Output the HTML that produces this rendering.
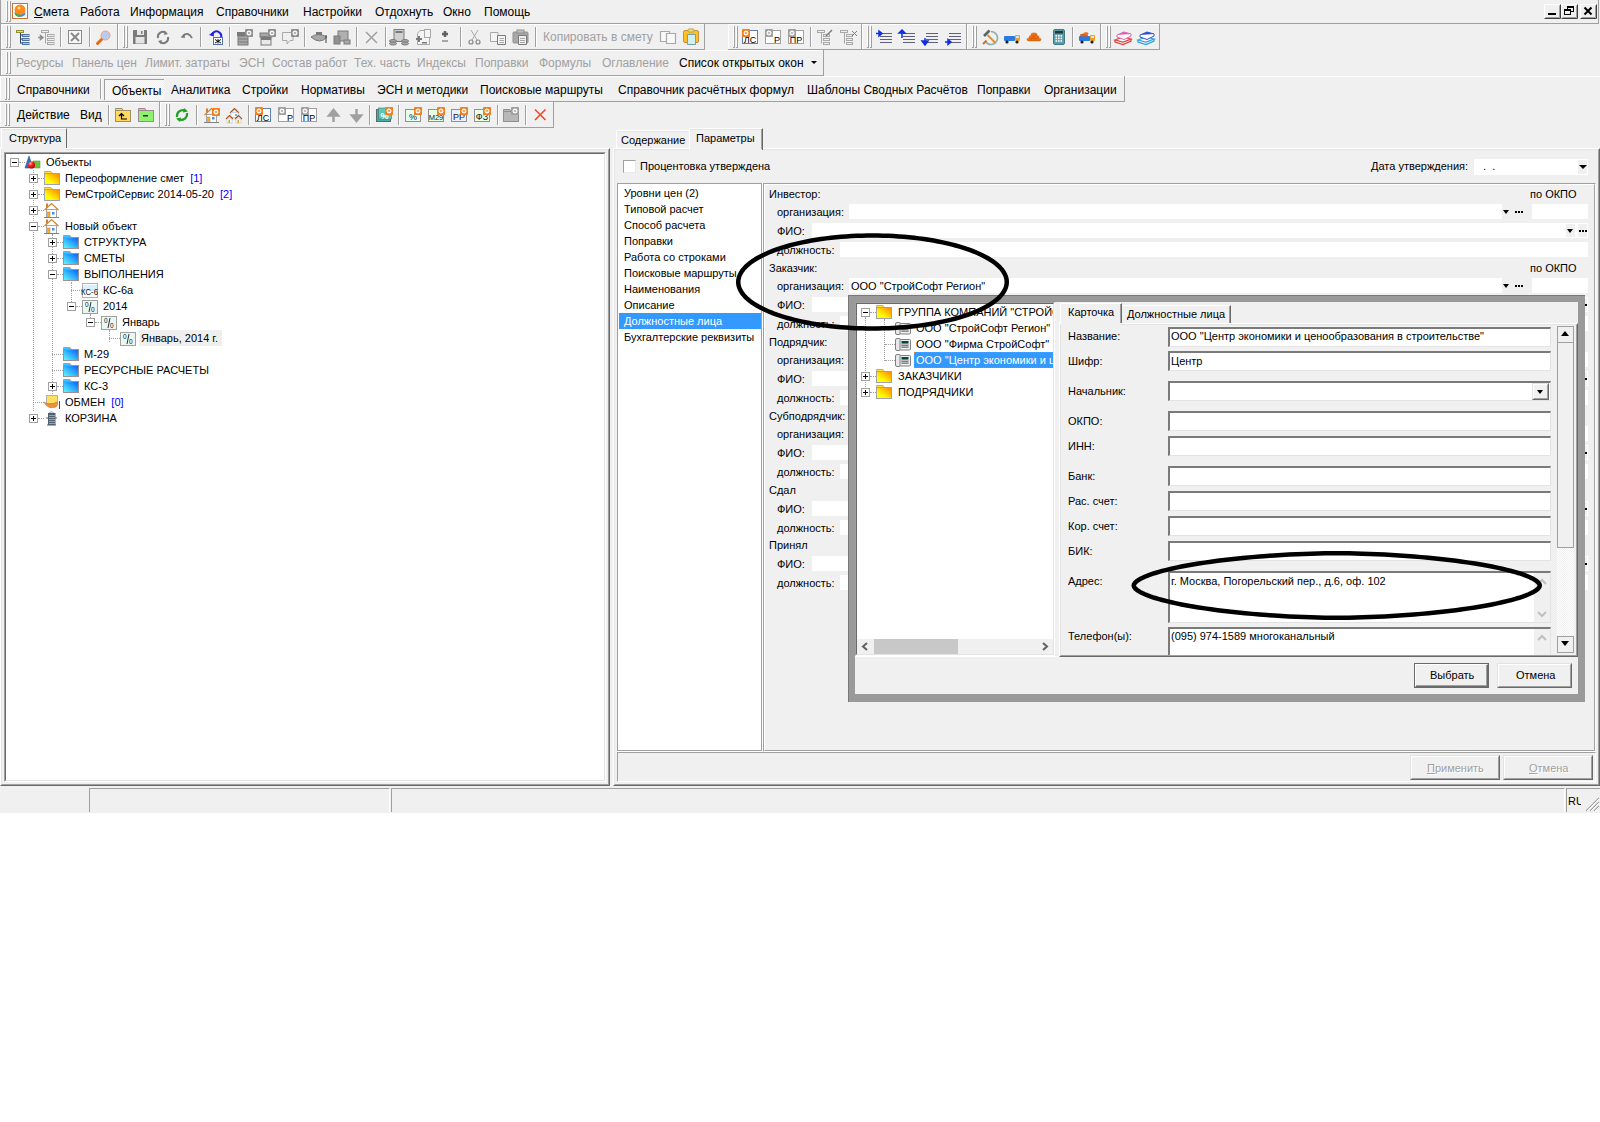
<!DOCTYPE html>
<html><head><meta charset="utf-8"><style>
*{box-sizing:border-box;margin:0;padding:0}
html,body{width:1600px;height:1122px;overflow:hidden;background:#fff}
body{position:relative;font-family:"Liberation Sans",sans-serif;font-size:11px;color:#000}
.a{position:absolute}
.t{position:absolute;white-space:nowrap}
svg{position:absolute;overflow:visible}
</style></head><body>
<div class="a" style="left:0px;top:0px;width:1600px;height:813px;background:#f0f0f0"></div>
<div class="a" style="left:0px;top:23px;width:1599px;height:1px;background:#a0a0a0"></div>
<div class="a" style="left:1598px;top:0px;width:1px;height:23px;background:#a0a0a0"></div>
<div class="a" style="left:0px;top:0px;width:1px;height:76px;background:#a0a0a0"></div>
<div class="a" style="left:6px;top:1px;width:1px;height:21px;background:#fff"></div>
<div class="a" style="left:7px;top:1px;width:1px;height:21px;background:#a0a0a0"></div>
<div class="a" style="left:6px;top:21px;width:1px;height:1px;background:#a0a0a0"></div>
<div class="a" style="left:9px;top:1px;width:1px;height:21px;background:#fff"></div>
<div class="a" style="left:10px;top:1px;width:1px;height:21px;background:#a0a0a0"></div>
<div class="a" style="left:9px;top:21px;width:1px;height:1px;background:#a0a0a0"></div>
<div class="t" style="left:34px;top:5px;font-size:12px;line-height:14px;color:#000;"><u>С</u>мета</div>
<div class="t" style="left:80px;top:5px;font-size:12px;line-height:14px;color:#000;">Работа</div>
<div class="t" style="left:130px;top:5px;font-size:12px;line-height:14px;color:#000;">Информация</div>
<div class="t" style="left:216px;top:5px;font-size:12px;line-height:14px;color:#000;">Справочники</div>
<div class="t" style="left:303px;top:5px;font-size:12px;line-height:14px;color:#000;">Настройки</div>
<div class="t" style="left:375px;top:5px;font-size:12px;line-height:14px;color:#000;">Отдохнуть</div>
<div class="t" style="left:443px;top:5px;font-size:12px;line-height:14px;color:#000;">Окно</div>
<div class="t" style="left:484px;top:5px;font-size:12px;line-height:14px;color:#000;">Помощь</div>
<div class="a" style="left:1px;top:24px;width:116px;height:1px;background:#fff"></div>
<div class="a" style="left:1px;top:24px;width:1px;height:25px;background:#fff"></div>
<div class="a" style="left:1px;top:49px;width:117px;height:1px;background:#a0a0a0"></div>
<div class="a" style="left:117px;top:24px;width:1px;height:25px;background:#a0a0a0"></div>
<div class="a" style="left:6px;top:26px;width:1px;height:22px;background:#fff"></div>
<div class="a" style="left:7px;top:26px;width:1px;height:22px;background:#a0a0a0"></div>
<div class="a" style="left:6px;top:47px;width:1px;height:1px;background:#a0a0a0"></div>
<div class="a" style="left:9px;top:26px;width:1px;height:22px;background:#fff"></div>
<div class="a" style="left:10px;top:26px;width:1px;height:22px;background:#a0a0a0"></div>
<div class="a" style="left:9px;top:47px;width:1px;height:1px;background:#a0a0a0"></div>
<div class="a" style="left:118px;top:24px;width:586px;height:1px;background:#fff"></div>
<div class="a" style="left:118px;top:24px;width:1px;height:25px;background:#fff"></div>
<div class="a" style="left:118px;top:49px;width:587px;height:1px;background:#a0a0a0"></div>
<div class="a" style="left:704px;top:24px;width:1px;height:25px;background:#a0a0a0"></div>
<div class="a" style="left:123px;top:26px;width:1px;height:22px;background:#fff"></div>
<div class="a" style="left:124px;top:26px;width:1px;height:22px;background:#a0a0a0"></div>
<div class="a" style="left:123px;top:47px;width:1px;height:1px;background:#a0a0a0"></div>
<div class="a" style="left:126px;top:26px;width:1px;height:22px;background:#fff"></div>
<div class="a" style="left:127px;top:26px;width:1px;height:22px;background:#a0a0a0"></div>
<div class="a" style="left:126px;top:47px;width:1px;height:1px;background:#a0a0a0"></div>
<div class="a" style="left:728px;top:24px;width:133px;height:1px;background:#fff"></div>
<div class="a" style="left:728px;top:24px;width:1px;height:25px;background:#fff"></div>
<div class="a" style="left:728px;top:49px;width:134px;height:1px;background:#a0a0a0"></div>
<div class="a" style="left:861px;top:24px;width:1px;height:25px;background:#a0a0a0"></div>
<div class="a" style="left:733px;top:26px;width:1px;height:22px;background:#fff"></div>
<div class="a" style="left:734px;top:26px;width:1px;height:22px;background:#a0a0a0"></div>
<div class="a" style="left:733px;top:47px;width:1px;height:1px;background:#a0a0a0"></div>
<div class="a" style="left:736px;top:26px;width:1px;height:22px;background:#fff"></div>
<div class="a" style="left:737px;top:26px;width:1px;height:22px;background:#a0a0a0"></div>
<div class="a" style="left:736px;top:47px;width:1px;height:1px;background:#a0a0a0"></div>
<div class="a" style="left:862px;top:24px;width:104px;height:1px;background:#fff"></div>
<div class="a" style="left:862px;top:24px;width:1px;height:25px;background:#fff"></div>
<div class="a" style="left:862px;top:49px;width:105px;height:1px;background:#a0a0a0"></div>
<div class="a" style="left:966px;top:24px;width:1px;height:25px;background:#a0a0a0"></div>
<div class="a" style="left:867px;top:26px;width:1px;height:22px;background:#fff"></div>
<div class="a" style="left:868px;top:26px;width:1px;height:22px;background:#a0a0a0"></div>
<div class="a" style="left:867px;top:47px;width:1px;height:1px;background:#a0a0a0"></div>
<div class="a" style="left:870px;top:26px;width:1px;height:22px;background:#fff"></div>
<div class="a" style="left:871px;top:26px;width:1px;height:22px;background:#a0a0a0"></div>
<div class="a" style="left:870px;top:47px;width:1px;height:1px;background:#a0a0a0"></div>
<div class="a" style="left:967px;top:24px;width:133px;height:1px;background:#fff"></div>
<div class="a" style="left:967px;top:24px;width:1px;height:25px;background:#fff"></div>
<div class="a" style="left:967px;top:49px;width:134px;height:1px;background:#a0a0a0"></div>
<div class="a" style="left:1100px;top:24px;width:1px;height:25px;background:#a0a0a0"></div>
<div class="a" style="left:972px;top:26px;width:1px;height:22px;background:#fff"></div>
<div class="a" style="left:973px;top:26px;width:1px;height:22px;background:#a0a0a0"></div>
<div class="a" style="left:972px;top:47px;width:1px;height:1px;background:#a0a0a0"></div>
<div class="a" style="left:975px;top:26px;width:1px;height:22px;background:#fff"></div>
<div class="a" style="left:976px;top:26px;width:1px;height:22px;background:#a0a0a0"></div>
<div class="a" style="left:975px;top:47px;width:1px;height:1px;background:#a0a0a0"></div>
<div class="a" style="left:1101px;top:24px;width:58px;height:1px;background:#fff"></div>
<div class="a" style="left:1101px;top:24px;width:1px;height:25px;background:#fff"></div>
<div class="a" style="left:1101px;top:49px;width:59px;height:1px;background:#a0a0a0"></div>
<div class="a" style="left:1159px;top:24px;width:1px;height:25px;background:#a0a0a0"></div>
<div class="a" style="left:1106px;top:26px;width:1px;height:22px;background:#fff"></div>
<div class="a" style="left:1107px;top:26px;width:1px;height:22px;background:#a0a0a0"></div>
<div class="a" style="left:1106px;top:47px;width:1px;height:1px;background:#a0a0a0"></div>
<div class="a" style="left:1109px;top:26px;width:1px;height:22px;background:#fff"></div>
<div class="a" style="left:1110px;top:26px;width:1px;height:22px;background:#a0a0a0"></div>
<div class="a" style="left:1109px;top:47px;width:1px;height:1px;background:#a0a0a0"></div>
<div class="a" style="left:60px;top:27px;width:1px;height:20px;background:#a0a0a0"></div>
<div class="a" style="left:61px;top:27px;width:1px;height:20px;background:#fff"></div>
<div class="a" style="left:89px;top:27px;width:1px;height:20px;background:#a0a0a0"></div>
<div class="a" style="left:90px;top:27px;width:1px;height:20px;background:#fff"></div>
<div class="a" style="left:200px;top:27px;width:1px;height:20px;background:#a0a0a0"></div>
<div class="a" style="left:201px;top:27px;width:1px;height:20px;background:#fff"></div>
<div class="a" style="left:229px;top:27px;width:1px;height:20px;background:#a0a0a0"></div>
<div class="a" style="left:230px;top:27px;width:1px;height:20px;background:#fff"></div>
<div class="a" style="left:304px;top:27px;width:1px;height:20px;background:#a0a0a0"></div>
<div class="a" style="left:305px;top:27px;width:1px;height:20px;background:#fff"></div>
<div class="a" style="left:356px;top:27px;width:1px;height:20px;background:#a0a0a0"></div>
<div class="a" style="left:357px;top:27px;width:1px;height:20px;background:#fff"></div>
<div class="a" style="left:385px;top:27px;width:1px;height:20px;background:#a0a0a0"></div>
<div class="a" style="left:386px;top:27px;width:1px;height:20px;background:#fff"></div>
<div class="a" style="left:460px;top:27px;width:1px;height:20px;background:#a0a0a0"></div>
<div class="a" style="left:461px;top:27px;width:1px;height:20px;background:#fff"></div>
<div class="a" style="left:535px;top:27px;width:1px;height:20px;background:#a0a0a0"></div>
<div class="a" style="left:536px;top:27px;width:1px;height:20px;background:#fff"></div>
<div class="a" style="left:810px;top:27px;width:1px;height:20px;background:#a0a0a0"></div>
<div class="a" style="left:811px;top:27px;width:1px;height:20px;background:#fff"></div>
<div class="a" style="left:1072px;top:27px;width:1px;height:20px;background:#a0a0a0"></div>
<div class="a" style="left:1073px;top:27px;width:1px;height:20px;background:#fff"></div>
<div class="a" style="left:1px;top:50px;width:822px;height:1px;background:#fff"></div>
<div class="a" style="left:1px;top:50px;width:1px;height:25px;background:#fff"></div>
<div class="a" style="left:1px;top:75px;width:823px;height:1px;background:#a0a0a0"></div>
<div class="a" style="left:823px;top:50px;width:1px;height:25px;background:#a0a0a0"></div>
<div class="a" style="left:6px;top:52px;width:1px;height:22px;background:#fff"></div>
<div class="a" style="left:7px;top:52px;width:1px;height:22px;background:#a0a0a0"></div>
<div class="a" style="left:6px;top:73px;width:1px;height:1px;background:#a0a0a0"></div>
<div class="a" style="left:9px;top:52px;width:1px;height:22px;background:#fff"></div>
<div class="a" style="left:10px;top:52px;width:1px;height:22px;background:#a0a0a0"></div>
<div class="a" style="left:9px;top:73px;width:1px;height:1px;background:#a0a0a0"></div>
<div class="t" style="left:16px;top:56px;font-size:12px;line-height:14px;color:#a0a0a0;">Ресурсы</div>
<div class="t" style="left:72px;top:56px;font-size:12px;line-height:14px;color:#a0a0a0;">Панель цен</div>
<div class="t" style="left:145px;top:56px;font-size:12px;line-height:14px;color:#a0a0a0;">Лимит. затраты</div>
<div class="t" style="left:239px;top:56px;font-size:12px;line-height:14px;color:#a0a0a0;">ЭСН</div>
<div class="t" style="left:272px;top:56px;font-size:12px;line-height:14px;color:#a0a0a0;">Состав работ</div>
<div class="t" style="left:354px;top:56px;font-size:12px;line-height:14px;color:#a0a0a0;">Тех. часть</div>
<div class="t" style="left:417px;top:56px;font-size:12px;line-height:14px;color:#a0a0a0;">Индексы</div>
<div class="t" style="left:475px;top:56px;font-size:12px;line-height:14px;color:#a0a0a0;">Поправки</div>
<div class="t" style="left:539px;top:56px;font-size:12px;line-height:14px;color:#a0a0a0;">Формулы</div>
<div class="t" style="left:602px;top:56px;font-size:12px;line-height:14px;color:#a0a0a0;">Оглавление</div>
<div class="t" style="left:679px;top:56px;font-size:12px;line-height:14px;color:#000;">Список открытых окон</div>
<div class="a" style="left:811px;top:61px;width:0;height:0;border-left:3px solid transparent;border-right:3px solid transparent;border-top:3.5px solid #000"></div>
<div class="t" style="left:543px;top:30px;font-size:12px;line-height:14px;color:#a0a0a0;">Копировать в смету</div>
<div class="a" style="left:0px;top:76px;width:1600px;height:1px;background:#fff"></div>
<div class="a" style="left:0px;top:76px;width:1124px;height:1px;background:#fff"></div>
<div class="a" style="left:0px;top:76px;width:1px;height:25px;background:#fff"></div>
<div class="a" style="left:0px;top:101px;width:1125px;height:1px;background:#a0a0a0"></div>
<div class="a" style="left:1124px;top:76px;width:1px;height:25px;background:#a0a0a0"></div>
<div class="a" style="left:5px;top:78px;width:1px;height:22px;background:#fff"></div>
<div class="a" style="left:6px;top:78px;width:1px;height:22px;background:#a0a0a0"></div>
<div class="a" style="left:5px;top:99px;width:1px;height:1px;background:#a0a0a0"></div>
<div class="a" style="left:8px;top:78px;width:1px;height:22px;background:#fff"></div>
<div class="a" style="left:9px;top:78px;width:1px;height:22px;background:#a0a0a0"></div>
<div class="a" style="left:8px;top:99px;width:1px;height:1px;background:#a0a0a0"></div>
<div class="a" style="left:100px;top:79px;width:1px;height:20px;background:#a0a0a0"></div>
<div class="a" style="left:101px;top:79px;width:1px;height:20px;background:#fff"></div>
<div class="a" style="left:104px;top:79px;width:60px;height:21px;background:repeating-conic-gradient(#f0f0f0 0 25%, #fbfbfb 0 50%) 0 0/2px 2px;border-top:1px solid #a0a0a0;border-left:1px solid #a0a0a0"></div>
<div class="t" style="left:112px;top:84px;font-size:12px;line-height:14px;color:#000;">Объекты</div>
<div class="t" style="left:17px;top:83px;font-size:12px;line-height:14px;color:#000;">Справочники</div>
<div class="t" style="left:171px;top:83px;font-size:12px;line-height:14px;color:#000;">Аналитика</div>
<div class="t" style="left:242px;top:83px;font-size:12px;line-height:14px;color:#000;">Стройки</div>
<div class="t" style="left:301px;top:83px;font-size:12px;line-height:14px;color:#000;">Нормативы</div>
<div class="t" style="left:377px;top:83px;font-size:12px;line-height:14px;color:#000;">ЭСН и методики</div>
<div class="t" style="left:480px;top:83px;font-size:12px;line-height:14px;color:#000;">Поисковые маршруты</div>
<div class="t" style="left:618px;top:83px;font-size:12px;line-height:14px;color:#000;">Справочник расчётных формул</div>
<div class="t" style="left:807px;top:83px;font-size:12px;line-height:14px;color:#000;">Шаблоны Сводных Расчётов</div>
<div class="t" style="left:977px;top:83px;font-size:12px;line-height:14px;color:#000;">Поправки</div>
<div class="t" style="left:1044px;top:83px;font-size:12px;line-height:14px;color:#000;">Организации</div>
<div class="a" style="left:0px;top:102px;width:553px;height:1px;background:#fff"></div>
<div class="a" style="left:0px;top:102px;width:1px;height:25px;background:#fff"></div>
<div class="a" style="left:0px;top:127px;width:554px;height:1px;background:#a0a0a0"></div>
<div class="a" style="left:553px;top:102px;width:1px;height:25px;background:#a0a0a0"></div>
<div class="a" style="left:5px;top:104px;width:1px;height:22px;background:#fff"></div>
<div class="a" style="left:6px;top:104px;width:1px;height:22px;background:#a0a0a0"></div>
<div class="a" style="left:5px;top:125px;width:1px;height:1px;background:#a0a0a0"></div>
<div class="a" style="left:8px;top:104px;width:1px;height:22px;background:#fff"></div>
<div class="a" style="left:9px;top:104px;width:1px;height:22px;background:#a0a0a0"></div>
<div class="a" style="left:8px;top:125px;width:1px;height:1px;background:#a0a0a0"></div>
<div class="a" style="left:108px;top:105px;width:1px;height:20px;background:#a0a0a0"></div>
<div class="a" style="left:109px;top:105px;width:1px;height:20px;background:#fff"></div>
<div class="a" style="left:196px;top:105px;width:1px;height:20px;background:#a0a0a0"></div>
<div class="a" style="left:197px;top:105px;width:1px;height:20px;background:#fff"></div>
<div class="a" style="left:248px;top:105px;width:1px;height:20px;background:#a0a0a0"></div>
<div class="a" style="left:249px;top:105px;width:1px;height:20px;background:#fff"></div>
<div class="a" style="left:369px;top:105px;width:1px;height:20px;background:#a0a0a0"></div>
<div class="a" style="left:370px;top:105px;width:1px;height:20px;background:#fff"></div>
<div class="a" style="left:398px;top:105px;width:1px;height:20px;background:#a0a0a0"></div>
<div class="a" style="left:399px;top:105px;width:1px;height:20px;background:#fff"></div>
<div class="a" style="left:497px;top:105px;width:1px;height:20px;background:#a0a0a0"></div>
<div class="a" style="left:498px;top:105px;width:1px;height:20px;background:#fff"></div>
<div class="a" style="left:525px;top:105px;width:1px;height:20px;background:#a0a0a0"></div>
<div class="a" style="left:526px;top:105px;width:1px;height:20px;background:#fff"></div>
<div class="a" style="left:159px;top:102px;width:1px;height:26px;background:#a0a0a0"></div>
<div class="a" style="left:160px;top:102px;width:1px;height:25px;background:#fff"></div>
<div class="a" style="left:165px;top:104px;width:1px;height:22px;background:#fff"></div>
<div class="a" style="left:166px;top:104px;width:1px;height:22px;background:#a0a0a0"></div>
<div class="a" style="left:165px;top:125px;width:1px;height:1px;background:#a0a0a0"></div>
<div class="a" style="left:168px;top:104px;width:1px;height:22px;background:#fff"></div>
<div class="a" style="left:169px;top:104px;width:1px;height:22px;background:#a0a0a0"></div>
<div class="a" style="left:168px;top:125px;width:1px;height:1px;background:#a0a0a0"></div>
<div class="t" style="left:17px;top:108px;font-size:12px;line-height:14px;color:#000;">Действие</div>
<div class="t" style="left:80px;top:108px;font-size:12px;line-height:14px;color:#000;">Вид</div>
<div class="a" style="left:1px;top:128px;width:66px;height:21px;background:#f0f0f0;border-top:1px solid #fff;border-left:1px solid #fff;border-right:1px solid #696969"></div>
<div class="a" style="left:2px;top:129px;width:63px;height:1px;background:#e3e3e3"></div>
<div class="t" style="left:9px;top:132px;font-size:11px;line-height:13px;color:#000;">Структура</div>
<div class="a" style="left:0px;top:148px;width:610px;height:638px;border-top:1px solid #fff;border-left:1px solid #fff;border-right:1px solid #696969;border-bottom:1px solid #696969"></div>
<div class="a" style="left:1px;top:149px;width:608px;height:636px;border-top:1px solid #e3e3e3;border-left:1px solid #e3e3e3;border-right:1px solid #a0a0a0;border-bottom:1px solid #a0a0a0"></div>
<div class="a" style="left:2px;top:148px;width:64px;height:1px;background:#f0f0f0"></div>
<div class="a" style="left:2px;top:149px;width:64px;height:1px;background:#f0f0f0"></div>
<div class="a" style="left:4px;top:152px;width:602px;height:630px;background:#fff;border-top:1px solid #a0a0a0;border-left:1px solid #a0a0a0;border-bottom:1px solid #fff;border-right:1px solid #fff"></div>
<div class="a" style="left:5px;top:153px;width:600px;height:628px;border-top:1px solid #696969;border-left:1px solid #696969;border-bottom:1px solid #e3e3e3;border-right:1px solid #e3e3e3"></div>
<div class="a" style="left:33px;top:170px;width:1px;height:241px;border-left:1px dotted #a0a0a0"></div>
<div class="a" style="left:52px;top:234px;width:1px;height:160px;border-left:1px dotted #a0a0a0"></div>
<div class="a" style="left:71px;top:282px;width:1px;height:28px;border-left:1px dotted #a0a0a0"></div>
<div class="a" style="left:90px;top:314px;width:1px;height:12px;border-left:1px dotted #a0a0a0"></div>
<div class="a" style="left:109px;top:330px;width:1px;height:12px;border-left:1px dotted #a0a0a0"></div>
<div class="a" style="left:19px;top:162px;width:6px;height:1px;border-top:1px dotted #a0a0a0"></div>
<div class="a" style="left:10px;top:158px;width:9px;height:9px;background:#fff;border:1px solid #a0a0a0"></div>
<div class="a" style="left:12px;top:162px;width:5px;height:1px;background:#000"></div>
<div class="t" style="left:46px;top:156px;font-size:11px;line-height:13px;color:#000;">Объекты</div>
<div class="a" style="left:38px;top:178px;width:6px;height:1px;border-top:1px dotted #a0a0a0"></div>
<div class="a" style="left:29px;top:174px;width:9px;height:9px;background:#fff;border:1px solid #a0a0a0"></div>
<div class="a" style="left:31px;top:178px;width:5px;height:1px;background:#000"></div>
<div class="a" style="left:33px;top:176px;width:1px;height:5px;background:#000"></div>
<div class="t" style="left:65px;top:172px;font-size:11px;line-height:13px;color:#000;">Переоформление смет&nbsp; <span style="color:#00f">[1]</span></div>
<div class="a" style="left:38px;top:194px;width:6px;height:1px;border-top:1px dotted #a0a0a0"></div>
<div class="a" style="left:29px;top:190px;width:9px;height:9px;background:#fff;border:1px solid #a0a0a0"></div>
<div class="a" style="left:31px;top:194px;width:5px;height:1px;background:#000"></div>
<div class="a" style="left:33px;top:192px;width:1px;height:5px;background:#000"></div>
<div class="t" style="left:65px;top:188px;font-size:11px;line-height:13px;color:#000;">РемСтройСервис 2014-05-20&nbsp; <span style="color:#00f">[2]</span></div>
<div class="a" style="left:38px;top:210px;width:6px;height:1px;border-top:1px dotted #a0a0a0"></div>
<div class="a" style="left:29px;top:206px;width:9px;height:9px;background:#fff;border:1px solid #a0a0a0"></div>
<div class="a" style="left:31px;top:210px;width:5px;height:1px;background:#000"></div>
<div class="a" style="left:33px;top:208px;width:1px;height:5px;background:#000"></div>
<div class="a" style="left:38px;top:226px;width:6px;height:1px;border-top:1px dotted #a0a0a0"></div>
<div class="a" style="left:29px;top:222px;width:9px;height:9px;background:#fff;border:1px solid #a0a0a0"></div>
<div class="a" style="left:31px;top:226px;width:5px;height:1px;background:#000"></div>
<div class="t" style="left:65px;top:220px;font-size:11px;line-height:13px;color:#000;">Новый объект</div>
<div class="a" style="left:57px;top:242px;width:6px;height:1px;border-top:1px dotted #a0a0a0"></div>
<div class="a" style="left:48px;top:238px;width:9px;height:9px;background:#fff;border:1px solid #a0a0a0"></div>
<div class="a" style="left:50px;top:242px;width:5px;height:1px;background:#000"></div>
<div class="a" style="left:52px;top:240px;width:1px;height:5px;background:#000"></div>
<div class="t" style="left:84px;top:236px;font-size:11px;line-height:13px;color:#000;">СТРУКТУРА</div>
<div class="a" style="left:57px;top:258px;width:6px;height:1px;border-top:1px dotted #a0a0a0"></div>
<div class="a" style="left:48px;top:254px;width:9px;height:9px;background:#fff;border:1px solid #a0a0a0"></div>
<div class="a" style="left:50px;top:258px;width:5px;height:1px;background:#000"></div>
<div class="a" style="left:52px;top:256px;width:1px;height:5px;background:#000"></div>
<div class="t" style="left:84px;top:252px;font-size:11px;line-height:13px;color:#000;">СМЕТЫ</div>
<div class="a" style="left:57px;top:274px;width:6px;height:1px;border-top:1px dotted #a0a0a0"></div>
<div class="a" style="left:48px;top:270px;width:9px;height:9px;background:#fff;border:1px solid #a0a0a0"></div>
<div class="a" style="left:50px;top:274px;width:5px;height:1px;background:#000"></div>
<div class="t" style="left:84px;top:268px;font-size:11px;line-height:13px;color:#000;">ВЫПОЛНЕНИЯ</div>
<div class="a" style="left:71px;top:290px;width:11px;height:1px;border-top:1px dotted #a0a0a0"></div>
<div class="t" style="left:103px;top:284px;font-size:11px;line-height:13px;color:#000;">КС-6а</div>
<div class="a" style="left:76px;top:306px;width:6px;height:1px;border-top:1px dotted #a0a0a0"></div>
<div class="a" style="left:67px;top:302px;width:9px;height:9px;background:#fff;border:1px solid #a0a0a0"></div>
<div class="a" style="left:69px;top:306px;width:5px;height:1px;background:#000"></div>
<div class="t" style="left:103px;top:300px;font-size:11px;line-height:13px;color:#000;">2014</div>
<div class="a" style="left:95px;top:322px;width:6px;height:1px;border-top:1px dotted #a0a0a0"></div>
<div class="a" style="left:86px;top:318px;width:9px;height:9px;background:#fff;border:1px solid #a0a0a0"></div>
<div class="a" style="left:88px;top:322px;width:5px;height:1px;background:#000"></div>
<div class="t" style="left:122px;top:316px;font-size:11px;line-height:13px;color:#000;">Январь</div>
<div class="a" style="left:109px;top:338px;width:11px;height:1px;border-top:1px dotted #a0a0a0"></div>
<div class="a" style="left:139px;top:330px;width:83px;height:16px;background:#efefef"></div>
<div class="t" style="left:141px;top:332px;font-size:11px;line-height:13px;color:#000;">Январь, 2014 г.</div>
<div class="a" style="left:52px;top:354px;width:11px;height:1px;border-top:1px dotted #a0a0a0"></div>
<div class="t" style="left:84px;top:348px;font-size:11px;line-height:13px;color:#000;">М-29</div>
<div class="a" style="left:52px;top:370px;width:11px;height:1px;border-top:1px dotted #a0a0a0"></div>
<div class="t" style="left:84px;top:364px;font-size:11px;line-height:13px;color:#000;">РЕСУРСНЫЕ РАСЧЕТЫ</div>
<div class="a" style="left:57px;top:386px;width:6px;height:1px;border-top:1px dotted #a0a0a0"></div>
<div class="a" style="left:48px;top:382px;width:9px;height:9px;background:#fff;border:1px solid #a0a0a0"></div>
<div class="a" style="left:50px;top:386px;width:5px;height:1px;background:#000"></div>
<div class="a" style="left:52px;top:384px;width:1px;height:5px;background:#000"></div>
<div class="t" style="left:84px;top:380px;font-size:11px;line-height:13px;color:#000;">КС-3</div>
<div class="a" style="left:33px;top:402px;width:11px;height:1px;border-top:1px dotted #a0a0a0"></div>
<div class="t" style="left:65px;top:396px;font-size:11px;line-height:13px;color:#000;">ОБМЕН&nbsp; <span style="color:#00f">[0]</span></div>
<div class="a" style="left:38px;top:418px;width:6px;height:1px;border-top:1px dotted #a0a0a0"></div>
<div class="a" style="left:29px;top:414px;width:9px;height:9px;background:#fff;border:1px solid #a0a0a0"></div>
<div class="a" style="left:31px;top:418px;width:5px;height:1px;background:#000"></div>
<div class="a" style="left:33px;top:416px;width:1px;height:5px;background:#000"></div>
<div class="t" style="left:65px;top:412px;font-size:11px;line-height:13px;color:#000;">КОРЗИНА</div>
<div class="a" style="left:616px;top:130px;width:73px;height:19px;background:#f0f0f0;border-top:1px solid #fff;border-left:1px solid #fff"></div>
<div class="a" style="left:617px;top:131px;width:71px;height:1px;background:#e3e3e3"></div>
<div class="t" style="left:621px;top:134px;font-size:11px;line-height:13px;color:#000;">Содержание</div>
<div class="a" style="left:613px;top:148px;width:987px;height:638px;border-top:1px solid #fff;border-left:1px solid #fff;border-right:1px solid #696969;border-bottom:1px solid #696969"></div>
<div class="a" style="left:614px;top:149px;width:985px;height:636px;border-top:1px solid #e3e3e3;border-left:1px solid #e3e3e3;border-right:1px solid #a0a0a0;border-bottom:1px solid #a0a0a0"></div>
<div class="a" style="left:689px;top:128px;width:74px;height:22px;background:#f0f0f0;border-top:1px solid #fff;border-left:1px solid #fff;border-right:1px solid #696969"></div>
<div class="a" style="left:690px;top:129px;width:71px;height:1px;background:#e3e3e3"></div>
<div class="a" style="left:761px;top:129px;width:1px;height:20px;background:#a0a0a0"></div>
<div class="t" style="left:696px;top:132px;font-size:11px;line-height:13px;color:#000;">Параметры</div>
<div class="a" style="left:623px;top:160px;width:13px;height:13px;background:#fff;border-top:1px solid #a0a0a0;border-left:1px solid #a0a0a0;border-bottom:1px solid #e8e8e8;border-right:1px solid #e8e8e8"></div>
<div class="t" style="left:640px;top:160px;font-size:11px;line-height:13px;color:#000;">Процентовка утверждена</div>
<div class="t" style="left:1371px;top:160px;font-size:11px;line-height:13px;color:#000;">Дата утверждения:</div>
<div class="a" style="left:1474px;top:159px;width:114px;height:16px;background:#fff"></div>
<div class="t" style="left:1483px;top:160px;font-size:11px;line-height:13px;color:#000;">.&nbsp; .</div>
<div class="a" style="left:1578px;top:160px;width:9px;height:14px;background:#f0f0f0"></div>
<div class="a" style="left:1579px;top:165px;width:0;height:0;border-left:4px solid transparent;border-right:4px solid transparent;border-top:4px solid #000"></div>
<div class="a" style="left:617px;top:183px;width:145px;height:568px;background:#fff;border:1px solid #a0a0a0"></div>
<div class="a" style="left:762px;top:183px;width:1px;height:569px;background:#fff"></div>
<div class="a" style="left:617px;top:751px;width:146px;height:1px;background:#fff"></div>
<div class="a" style="left:619px;top:313px;width:142px;height:16px;background:#3399ff"></div>
<div class="t" style="left:624px;top:187px;font-size:11px;line-height:13px;color:#000;">Уровни цен (2)</div>
<div class="t" style="left:624px;top:203px;font-size:11px;line-height:13px;color:#000;">Типовой расчет</div>
<div class="t" style="left:624px;top:219px;font-size:11px;line-height:13px;color:#000;">Способ расчета</div>
<div class="t" style="left:624px;top:235px;font-size:11px;line-height:13px;color:#000;">Поправки</div>
<div class="t" style="left:624px;top:251px;font-size:11px;line-height:13px;color:#000;">Работа со строками</div>
<div class="t" style="left:624px;top:267px;font-size:11px;line-height:13px;color:#000;">Поисковые маршруты</div>
<div class="t" style="left:624px;top:283px;font-size:11px;line-height:13px;color:#000;">Наименования</div>
<div class="t" style="left:624px;top:299px;font-size:11px;line-height:13px;color:#000;">Описание</div>
<div class="t" style="left:624px;top:315px;font-size:11px;line-height:13px;color:#fff;">Должностные лица</div>
<div class="t" style="left:624px;top:331px;font-size:11px;line-height:13px;color:#000;">Бухгалтерские реквизиты</div>
<div class="a" style="left:763px;top:183px;width:833px;height:569px;border-top:1px solid #a0a0a0;border-left:1px solid #a0a0a0;border-right:1px solid #fff;border-bottom:1px solid #fff"></div>
<div class="a" style="left:764px;top:184px;width:831px;height:567px;border-top:1px solid #fff;border-left:1px solid #fff;border-right:1px solid #a0a0a0;border-bottom:1px solid #a0a0a0"></div>
<div class="a" style="left:617px;top:752px;width:979px;height:30px;border-top:1px solid #a0a0a0;border-left:1px solid #a0a0a0;border-right:1px solid #fff;border-bottom:1px solid #fff"></div>
<div class="a" style="left:1410px;top:755px;width:90px;height:25px;background:#f0f0f0;border-top:1px solid #e3e3e3;border-left:1px solid #e3e3e3;border-bottom:1px solid #696969;border-right:1px solid #696969"></div>
<div class="a" style="left:1411px;top:756px;width:88px;height:23px;border-top:1px solid #fff;border-left:1px solid #fff;border-bottom:1px solid #a0a0a0;border-right:1px solid #a0a0a0"></div>
<div class="t" style="left:1427px;top:762px;font-size:11px;line-height:13px;color:#a0a0a0;text-shadow:1px 1px 0 #fff"><u>П</u>рименить</div>
<div class="a" style="left:1503px;top:755px;width:90px;height:25px;background:#f0f0f0;border-top:1px solid #e3e3e3;border-left:1px solid #e3e3e3;border-bottom:1px solid #696969;border-right:1px solid #696969"></div>
<div class="a" style="left:1504px;top:756px;width:88px;height:23px;border-top:1px solid #fff;border-left:1px solid #fff;border-bottom:1px solid #a0a0a0;border-right:1px solid #a0a0a0"></div>
<div class="t" style="left:1529px;top:762px;font-size:11px;line-height:13px;color:#a0a0a0;text-shadow:1px 1px 0 #fff"><u>О</u>тмена</div>
<div class="t" style="left:769px;top:188px;font-size:11px;line-height:13px;color:#000;">Инвестор:</div>
<div class="t" style="left:1530px;top:188px;font-size:11px;line-height:13px;color:#000;">по ОКПО</div>
<div class="t" style="left:777px;top:206px;font-size:11px;line-height:13px;color:#000;">организация:</div>
<div class="a" style="left:849px;top:204px;width:653px;height:15px;background:#fff"></div>
<div class="a" style="left:1502px;top:205px;width:9px;height:13px;background:#f0f0f0"></div>
<div class="a" style="left:1503px;top:210px;width:0;height:0;border-left:3.5px solid transparent;border-right:3.5px solid transparent;border-top:4px solid #000"></div>
<div class="a" style="left:1514px;top:205px;width:9px;height:13px;background:#f0f0f0"></div>
<div class="a" style="left:1515px;top:211px;width:2px;height:2px;background:#000"></div>
<div class="a" style="left:1518px;top:211px;width:2px;height:2px;background:#000"></div>
<div class="a" style="left:1521px;top:211px;width:2px;height:2px;background:#000"></div>
<div class="a" style="left:1532px;top:204px;width:56px;height:15px;background:#fff"></div>
<div class="t" style="left:777px;top:225px;font-size:11px;line-height:13px;color:#000;">ФИО:</div>
<div class="a" style="left:812px;top:223px;width:776px;height:15px;background:#fff"></div>
<div class="a" style="left:1566px;top:224px;width:9px;height:13px;background:#f0f0f0"></div>
<div class="a" style="left:1567px;top:229px;width:0;height:0;border-left:3.5px solid transparent;border-right:3.5px solid transparent;border-top:4px solid #000"></div>
<div class="a" style="left:1578px;top:224px;width:9px;height:13px;background:#f0f0f0"></div>
<div class="a" style="left:1579px;top:230px;width:2px;height:2px;background:#000"></div>
<div class="a" style="left:1582px;top:230px;width:2px;height:2px;background:#000"></div>
<div class="a" style="left:1585px;top:230px;width:2px;height:2px;background:#000"></div>
<div class="t" style="left:777px;top:244px;font-size:11px;line-height:13px;color:#000;">должность:</div>
<div class="a" style="left:840px;top:242px;width:748px;height:15px;background:#fff"></div>
<div class="t" style="left:769px;top:262px;font-size:11px;line-height:13px;color:#000;">Заказчик:</div>
<div class="t" style="left:1530px;top:262px;font-size:11px;line-height:13px;color:#000;">по ОКПО</div>
<div class="t" style="left:777px;top:280px;font-size:11px;line-height:13px;color:#000;">организация:</div>
<div class="a" style="left:849px;top:278px;width:653px;height:15px;background:#fff"></div>
<div class="a" style="left:1502px;top:279px;width:9px;height:13px;background:#f0f0f0"></div>
<div class="a" style="left:1503px;top:284px;width:0;height:0;border-left:3.5px solid transparent;border-right:3.5px solid transparent;border-top:4px solid #000"></div>
<div class="a" style="left:1514px;top:279px;width:9px;height:13px;background:#f0f0f0"></div>
<div class="a" style="left:1515px;top:285px;width:2px;height:2px;background:#000"></div>
<div class="a" style="left:1518px;top:285px;width:2px;height:2px;background:#000"></div>
<div class="a" style="left:1521px;top:285px;width:2px;height:2px;background:#000"></div>
<div class="a" style="left:1532px;top:278px;width:56px;height:15px;background:#fff"></div>
<div class="t" style="left:777px;top:299px;font-size:11px;line-height:13px;color:#000;">ФИО:</div>
<div class="a" style="left:812px;top:297px;width:776px;height:15px;background:#fff"></div>
<div class="a" style="left:1566px;top:298px;width:9px;height:13px;background:#f0f0f0"></div>
<div class="a" style="left:1567px;top:303px;width:0;height:0;border-left:3.5px solid transparent;border-right:3.5px solid transparent;border-top:4px solid #000"></div>
<div class="a" style="left:1578px;top:298px;width:9px;height:13px;background:#f0f0f0"></div>
<div class="a" style="left:1579px;top:304px;width:2px;height:2px;background:#000"></div>
<div class="a" style="left:1582px;top:304px;width:2px;height:2px;background:#000"></div>
<div class="a" style="left:1585px;top:304px;width:2px;height:2px;background:#000"></div>
<div class="t" style="left:777px;top:318px;font-size:11px;line-height:13px;color:#000;">должность:</div>
<div class="a" style="left:840px;top:316px;width:748px;height:15px;background:#fff"></div>
<div class="t" style="left:851px;top:280px;font-size:11px;line-height:13px;color:#000;">ООО "СтройСофт Регион"</div>
<div class="t" style="left:769px;top:336px;font-size:11px;line-height:13px;color:#000;">Подрядчик:</div>
<div class="t" style="left:777px;top:354px;font-size:11px;line-height:13px;color:#000;">организация:</div>
<div class="a" style="left:849px;top:352px;width:653px;height:15px;background:#fff"></div>
<div class="a" style="left:1502px;top:353px;width:9px;height:13px;background:#f0f0f0"></div>
<div class="a" style="left:1503px;top:358px;width:0;height:0;border-left:3.5px solid transparent;border-right:3.5px solid transparent;border-top:4px solid #000"></div>
<div class="a" style="left:1514px;top:353px;width:9px;height:13px;background:#f0f0f0"></div>
<div class="a" style="left:1515px;top:359px;width:2px;height:2px;background:#000"></div>
<div class="a" style="left:1518px;top:359px;width:2px;height:2px;background:#000"></div>
<div class="a" style="left:1521px;top:359px;width:2px;height:2px;background:#000"></div>
<div class="a" style="left:1532px;top:352px;width:56px;height:15px;background:#fff"></div>
<div class="t" style="left:777px;top:373px;font-size:11px;line-height:13px;color:#000;">ФИО:</div>
<div class="a" style="left:812px;top:371px;width:776px;height:15px;background:#fff"></div>
<div class="a" style="left:1566px;top:372px;width:9px;height:13px;background:#f0f0f0"></div>
<div class="a" style="left:1567px;top:377px;width:0;height:0;border-left:3.5px solid transparent;border-right:3.5px solid transparent;border-top:4px solid #000"></div>
<div class="a" style="left:1578px;top:372px;width:9px;height:13px;background:#f0f0f0"></div>
<div class="a" style="left:1579px;top:378px;width:2px;height:2px;background:#000"></div>
<div class="a" style="left:1582px;top:378px;width:2px;height:2px;background:#000"></div>
<div class="a" style="left:1585px;top:378px;width:2px;height:2px;background:#000"></div>
<div class="t" style="left:777px;top:392px;font-size:11px;line-height:13px;color:#000;">должность:</div>
<div class="a" style="left:840px;top:390px;width:748px;height:15px;background:#fff"></div>
<div class="t" style="left:769px;top:410px;font-size:11px;line-height:13px;color:#000;">Субподрядчик:</div>
<div class="t" style="left:777px;top:428px;font-size:11px;line-height:13px;color:#000;">организация:</div>
<div class="a" style="left:849px;top:426px;width:653px;height:15px;background:#fff"></div>
<div class="a" style="left:1502px;top:427px;width:9px;height:13px;background:#f0f0f0"></div>
<div class="a" style="left:1503px;top:432px;width:0;height:0;border-left:3.5px solid transparent;border-right:3.5px solid transparent;border-top:4px solid #000"></div>
<div class="a" style="left:1514px;top:427px;width:9px;height:13px;background:#f0f0f0"></div>
<div class="a" style="left:1515px;top:433px;width:2px;height:2px;background:#000"></div>
<div class="a" style="left:1518px;top:433px;width:2px;height:2px;background:#000"></div>
<div class="a" style="left:1521px;top:433px;width:2px;height:2px;background:#000"></div>
<div class="a" style="left:1532px;top:426px;width:56px;height:15px;background:#fff"></div>
<div class="t" style="left:777px;top:447px;font-size:11px;line-height:13px;color:#000;">ФИО:</div>
<div class="a" style="left:812px;top:445px;width:776px;height:15px;background:#fff"></div>
<div class="a" style="left:1566px;top:446px;width:9px;height:13px;background:#f0f0f0"></div>
<div class="a" style="left:1567px;top:451px;width:0;height:0;border-left:3.5px solid transparent;border-right:3.5px solid transparent;border-top:4px solid #000"></div>
<div class="a" style="left:1578px;top:446px;width:9px;height:13px;background:#f0f0f0"></div>
<div class="a" style="left:1579px;top:452px;width:2px;height:2px;background:#000"></div>
<div class="a" style="left:1582px;top:452px;width:2px;height:2px;background:#000"></div>
<div class="a" style="left:1585px;top:452px;width:2px;height:2px;background:#000"></div>
<div class="t" style="left:777px;top:466px;font-size:11px;line-height:13px;color:#000;">должность:</div>
<div class="a" style="left:840px;top:464px;width:748px;height:15px;background:#fff"></div>
<div class="t" style="left:769px;top:484px;font-size:11px;line-height:13px;color:#000;">Сдал</div>
<div class="t" style="left:777px;top:503px;font-size:11px;line-height:13px;color:#000;">ФИО:</div>
<div class="a" style="left:812px;top:501px;width:776px;height:15px;background:#fff"></div>
<div class="a" style="left:1566px;top:502px;width:9px;height:13px;background:#f0f0f0"></div>
<div class="a" style="left:1567px;top:507px;width:0;height:0;border-left:3.5px solid transparent;border-right:3.5px solid transparent;border-top:4px solid #000"></div>
<div class="a" style="left:1578px;top:502px;width:9px;height:13px;background:#f0f0f0"></div>
<div class="a" style="left:1579px;top:508px;width:2px;height:2px;background:#000"></div>
<div class="a" style="left:1582px;top:508px;width:2px;height:2px;background:#000"></div>
<div class="a" style="left:1585px;top:508px;width:2px;height:2px;background:#000"></div>
<div class="t" style="left:777px;top:522px;font-size:11px;line-height:13px;color:#000;">должность:</div>
<div class="a" style="left:840px;top:520px;width:748px;height:15px;background:#fff"></div>
<div class="t" style="left:769px;top:539px;font-size:11px;line-height:13px;color:#000;">Принял</div>
<div class="t" style="left:777px;top:558px;font-size:11px;line-height:13px;color:#000;">ФИО:</div>
<div class="a" style="left:812px;top:556px;width:776px;height:15px;background:#fff"></div>
<div class="a" style="left:1566px;top:557px;width:9px;height:13px;background:#f0f0f0"></div>
<div class="a" style="left:1567px;top:562px;width:0;height:0;border-left:3.5px solid transparent;border-right:3.5px solid transparent;border-top:4px solid #000"></div>
<div class="a" style="left:1578px;top:557px;width:9px;height:13px;background:#f0f0f0"></div>
<div class="a" style="left:1579px;top:563px;width:2px;height:2px;background:#000"></div>
<div class="a" style="left:1582px;top:563px;width:2px;height:2px;background:#000"></div>
<div class="a" style="left:1585px;top:563px;width:2px;height:2px;background:#000"></div>
<div class="t" style="left:777px;top:577px;font-size:11px;line-height:13px;color:#000;">должность:</div>
<div class="a" style="left:840px;top:575px;width:748px;height:15px;background:#fff"></div>
<div class="a" style="left:848px;top:295px;width:737px;height:407px;background:#9a9a9a;border-top:1px solid #787878;border-left:1px solid #787878"></div>
<div class="a" style="left:855px;top:302px;width:723px;height:392px;background:#f0f0f0"></div>
<div class="a" style="left:855px;top:302px;width:200px;height:354px;background:#fff;border-top:1px solid #a0a0a0;border-left:1px solid #a0a0a0;border-right:1px solid #fff;border-bottom:1px solid #fff"></div>
<div class="a" style="left:856px;top:303px;width:198px;height:352px;border-top:1px solid #696969;border-left:1px solid #696969;border-right:1px solid #e3e3e3;border-bottom:1px solid #e3e3e3"></div>
<div class="a" style="left:857px;top:304px;width:196px;height:335px;overflow:hidden">
<div class="a" style="left:8px;top:13px;width:1px;height:76px;border-left:1px dotted #a0a0a0"></div>
<div class="a" style="left:27px;top:15px;width:1px;height:42px;border-left:1px dotted #a0a0a0"></div>
<div class="a" style="left:13px;top:8px;width:6px;height:1px;border-top:1px dotted #a0a0a0"></div>
<div class="a" style="left:13px;top:72px;width:6px;height:1px;border-top:1px dotted #a0a0a0"></div>
<div class="a" style="left:13px;top:88px;width:6px;height:1px;border-top:1px dotted #a0a0a0"></div>
<div class="a" style="left:28px;top:24px;width:10px;height:1px;border-top:1px dotted #a0a0a0"></div>
<div class="a" style="left:28px;top:40px;width:10px;height:1px;border-top:1px dotted #a0a0a0"></div>
<div class="a" style="left:28px;top:56px;width:10px;height:1px;border-top:1px dotted #a0a0a0"></div>
<div class="a" style="left:4px;top:4px;width:9px;height:9px;background:#fff;border:1px solid #a0a0a0"></div>
<div class="a" style="left:6px;top:8px;width:5px;height:1px;background:#000"></div>
<div class="a" style="left:4px;top:68px;width:9px;height:9px;background:#fff;border:1px solid #a0a0a0"></div>
<div class="a" style="left:6px;top:72px;width:5px;height:1px;background:#000"></div>
<div class="a" style="left:8px;top:70px;width:1px;height:5px;background:#000"></div>
<div class="a" style="left:4px;top:84px;width:9px;height:9px;background:#fff;border:1px solid #a0a0a0"></div>
<div class="a" style="left:6px;top:88px;width:5px;height:1px;background:#000"></div>
<div class="a" style="left:8px;top:86px;width:1px;height:5px;background:#000"></div>
<div class="a" style="left:57px;top:48px;width:150px;height:16px;background:#3399ff;border:1px dotted #e08020"></div>
<div class="t" style="left:41px;top:2px;font-size:11px;line-height:13px;color:#000">ГРУППА КОМПАНИЙ "СТРОЙСОФТ"</div>
<div class="t" style="left:59px;top:18px;font-size:11px;line-height:13px;color:#000">ООО "СтройСофт Регион"</div>
<div class="t" style="left:59px;top:34px;font-size:11px;line-height:13px;color:#000">ООО "Фирма СтройСофт"</div>
<div class="t" style="left:59px;top:50px;font-size:11px;line-height:13px;color:#fff">ООО "Центр экономики и ценообразования"</div>
<div class="t" style="left:41px;top:66px;font-size:11px;line-height:13px;color:#000">ЗАКАЗЧИКИ</div>
<div class="t" style="left:41px;top:82px;font-size:11px;line-height:13px;color:#000">ПОДРЯДЧИКИ</div>
</div>
<div class="a" style="left:857px;top:639px;width:196px;height:15px;background:#f0f0f0"></div>
<div class="a" style="left:874px;top:639px;width:84px;height:15px;background:#c8c8c8"></div>
<svg class="a" style="left:857px;top:639px" width="196" height="15"><path d="M10 4 L6 7.5 L10 11" stroke="#606060" stroke-width="2" fill="none"/><path d="M186 4 L190 7.5 L186 11" stroke="#606060" stroke-width="2" fill="none"/></svg>
<div class="a" style="left:1060px;top:303px;width:62px;height:21px;background:#f0f0f0;border-top:1px solid #fff;border-left:1px solid #fff;border-right:1px solid #696969"></div>
<div class="a" style="left:1120px;top:304px;width:1px;height:19px;background:#a0a0a0"></div>
<div class="t" style="left:1068px;top:306px;font-size:11px;line-height:13px;color:#000;">Карточка</div>
<div class="a" style="left:1122px;top:305px;width:109px;height:18px;background:#f0f0f0;border-top:1px solid #fff;border-right:1px solid #696969"></div>
<div class="a" style="left:1229px;top:306px;width:1px;height:17px;background:#a0a0a0"></div>
<div class="t" style="left:1127px;top:308px;font-size:11px;line-height:13px;color:#000;">Должностные лица</div>
<div class="a" style="left:1059px;top:323px;width:519px;height:334px;border-top:1px solid #fff;border-left:1px solid #fff;border-right:1px solid #696969;border-bottom:1px solid #696969"></div>
<div class="a" style="left:1060px;top:324px;width:517px;height:332px;border-top:1px solid #e3e3e3;border-left:1px solid #e3e3e3;border-right:1px solid #a0a0a0;border-bottom:1px solid #a0a0a0"></div>
<div class="a" style="left:1061px;top:323px;width:60px;height:1px;background:#f0f0f0"></div>
<div class="a" style="left:1061px;top:324px;width:59px;height:1px;background:#f0f0f0"></div>
<div class="t" style="left:1068px;top:330px;font-size:11px;line-height:13px;color:#000;">Название:</div>
<div class="t" style="left:1068px;top:355px;font-size:11px;line-height:13px;color:#000;">Шифр:</div>
<div class="t" style="left:1068px;top:385px;font-size:11px;line-height:13px;color:#000;">Начальник:</div>
<div class="t" style="left:1068px;top:415px;font-size:11px;line-height:13px;color:#000;">ОКПО:</div>
<div class="t" style="left:1068px;top:440px;font-size:11px;line-height:13px;color:#000;">ИНН:</div>
<div class="t" style="left:1068px;top:470px;font-size:11px;line-height:13px;color:#000;">Банк:</div>
<div class="t" style="left:1068px;top:495px;font-size:11px;line-height:13px;color:#000;">Рас. счет:</div>
<div class="t" style="left:1068px;top:520px;font-size:11px;line-height:13px;color:#000;">Кор. счет:</div>
<div class="t" style="left:1068px;top:545px;font-size:11px;line-height:13px;color:#000;">БИК:</div>
<div class="t" style="left:1068px;top:575px;font-size:11px;line-height:13px;color:#000;">Адрес:</div>
<div class="t" style="left:1068px;top:630px;font-size:11px;line-height:13px;color:#000;">Телефон(ы):</div>
<div class="a" style="left:1168px;top:327px;width:383px;height:20px;background:#fff;border-top:2px solid #7a7a7a;border-left:2px solid #7a7a7a;border-bottom:1px solid #e3e3e3;border-right:1px solid #e3e3e3"></div>
<div class="a" style="left:1168px;top:351px;width:383px;height:20px;background:#fff;border-top:2px solid #7a7a7a;border-left:2px solid #7a7a7a;border-bottom:1px solid #e3e3e3;border-right:1px solid #e3e3e3"></div>
<div class="a" style="left:1168px;top:381px;width:383px;height:20px;background:#fff;border-top:2px solid #7a7a7a;border-left:2px solid #7a7a7a;border-bottom:1px solid #e3e3e3;border-right:1px solid #e3e3e3"></div>
<div class="a" style="left:1168px;top:411px;width:383px;height:20px;background:#fff;border-top:2px solid #7a7a7a;border-left:2px solid #7a7a7a;border-bottom:1px solid #e3e3e3;border-right:1px solid #e3e3e3"></div>
<div class="a" style="left:1168px;top:436px;width:383px;height:20px;background:#fff;border-top:2px solid #7a7a7a;border-left:2px solid #7a7a7a;border-bottom:1px solid #e3e3e3;border-right:1px solid #e3e3e3"></div>
<div class="a" style="left:1168px;top:466px;width:383px;height:20px;background:#fff;border-top:2px solid #7a7a7a;border-left:2px solid #7a7a7a;border-bottom:1px solid #e3e3e3;border-right:1px solid #e3e3e3"></div>
<div class="a" style="left:1168px;top:491px;width:383px;height:20px;background:#fff;border-top:2px solid #7a7a7a;border-left:2px solid #7a7a7a;border-bottom:1px solid #e3e3e3;border-right:1px solid #e3e3e3"></div>
<div class="a" style="left:1168px;top:516px;width:383px;height:20px;background:#fff;border-top:2px solid #7a7a7a;border-left:2px solid #7a7a7a;border-bottom:1px solid #e3e3e3;border-right:1px solid #e3e3e3"></div>
<div class="a" style="left:1168px;top:541px;width:383px;height:20px;background:#fff;border-top:2px solid #7a7a7a;border-left:2px solid #7a7a7a;border-bottom:1px solid #e3e3e3;border-right:1px solid #e3e3e3"></div>
<div class="a" style="left:1168px;top:571px;width:383px;height:52px;background:#fff;border-top:2px solid #7a7a7a;border-left:2px solid #7a7a7a;border-bottom:1px solid #e3e3e3;border-right:1px solid #e3e3e3"></div>
<div class="a" style="left:1168px;top:627px;width:383px;height:28px;overflow:hidden">
<div class="a" style="left:0;top:0;width:383px;height:40px;background:#fff;border-top:2px solid #7a7a7a;border-left:2px solid #7a7a7a;border-right:1px solid #e3e3e3"></div>
</div>
<div class="t" style="left:1171px;top:330px;font-size:11px;line-height:13px;color:#000;">ООО "Центр экономики и ценообразования в строительстве"</div>
<div class="t" style="left:1171px;top:355px;font-size:11px;line-height:13px;color:#000;">Центр</div>
<div class="t" style="left:1171px;top:575px;font-size:11px;line-height:13px;color:#000;">г. Москва, Погорельский пер., д.6, оф. 102</div>
<div class="t" style="left:1171px;top:630px;font-size:11px;line-height:13px;color:#000;">(095) 974-1589 многоканальный</div>
<div class="a" style="left:1532px;top:383px;width:17px;height:17px;background:#f0f0f0;border-top:1px solid #e3e3e3;border-left:1px solid #e3e3e3;border-bottom:1px solid #696969;border-right:1px solid #696969"></div>
<div class="a" style="left:1533px;top:384px;width:15px;height:15px;border-top:1px solid #fff;border-left:1px solid #fff;border-bottom:1px solid #a0a0a0;border-right:1px solid #a0a0a0"></div>
<div class="a" style="left:1537px;top:390px;width:0;height:0;border-left:3.5px solid transparent;border-right:3.5px solid transparent;border-top:4px solid #000"></div>
<div class="a" style="left:1534px;top:573px;width:16px;height:49px;background:#f0f0f0"></div>
<div class="a" style="left:1534px;top:629px;width:16px;height:26px;background:#f0f0f0"></div>
<svg class="a" style="left:1534px;top:573px" width="16" height="80"><path d="M4 11 L8 7 L12 11" stroke="#c0c0c0" stroke-width="2" fill="none"/><path d="M4 39 L8 43 L12 39" stroke="#c0c0c0" stroke-width="2" fill="none"/><path d="M4 67 L8 63 L12 67" stroke="#c0c0c0" stroke-width="2" fill="none"/></svg>
<div class="a" style="left:1557px;top:326px;width:17px;height:326px;background:repeating-conic-gradient(#f0f0f0 0 25%, #fff 0 50%) 0 0/2px 2px"></div>
<div class="a" style="left:1557px;top:342px;width:17px;height:206px;background:#f0f0f0;border:1px solid #a0a0a0"></div>
<div class="a" style="left:1557px;top:326px;width:17px;height:17px;background:#f0f0f0;border:1px solid #a0a0a0"></div>
<div class="a" style="left:1557px;top:636px;width:17px;height:17px;background:#f0f0f0;border:1px solid #a0a0a0"></div>
<div class="a" style="left:1561px;top:331px;width:0;height:0;border-left:4.5px solid transparent;border-right:4.5px solid transparent;border-bottom:5px solid #000"></div>
<div class="a" style="left:1561px;top:641px;width:0;height:0;border-left:4.5px solid transparent;border-right:4.5px solid transparent;border-top:5px solid #000"></div>
<div class="a" style="left:855px;top:656px;width:204px;height:1px;background:#fff"></div>
<div class="a" style="left:1414px;top:663px;width:75px;height:25px;background:#f0f0f0;border:1px solid #696969"></div>
<div class="a" style="left:1415px;top:664px;width:73px;height:23px;border-top:1px solid #fff;border-left:1px solid #fff;border-right:1px solid #696969;border-bottom:1px solid #696969"></div>
<div class="a" style="left:1416px;top:665px;width:71px;height:21px;border-right:1px solid #a0a0a0;border-bottom:1px solid #a0a0a0"></div>
<div class="t" style="left:1430px;top:669px;font-size:11px;line-height:13px;color:#000;">Выбрать</div>
<div class="a" style="left:1497px;top:663px;width:75px;height:25px;background:#f0f0f0;border-top:1px solid #e3e3e3;border-left:1px solid #e3e3e3;border-bottom:1px solid #696969;border-right:1px solid #696969"></div>
<div class="a" style="left:1498px;top:664px;width:73px;height:23px;border-top:1px solid #fff;border-left:1px solid #fff;border-bottom:1px solid #a0a0a0;border-right:1px solid #a0a0a0"></div>
<div class="t" style="left:1516px;top:669px;font-size:11px;line-height:13px;color:#000;">Отмена</div>
<svg class="a" style="left:0;top:0" width="1600" height="813"><rect x="12.5" y="3.5" width="15" height="15" fill="#fff" stroke="#d07030" stroke-width="1" /><circle cx="20" cy="10" r="5.5" fill="#ff8a1a"/><path d="M14.5 12 Q20 18 25.5 12 L25 15 Q20 19 15 15Z" fill="#3a8ee0" stroke="none" stroke-width="1" /><path d="M14.5 12 Q17 15 20 15 L19 17 Q15.5 16 14.8 13Z" fill="#40b040" stroke="none" stroke-width="1" /><circle cx="19" cy="8" r="1.5" fill="#ffd8a0"/><rect x="16.5" y="30.5" width="7" height="2" fill="#f0f000" stroke="#909030" stroke-width="1" /><path d="M20.5 33V43.5M20.5 35H22.5M20.5 39H22.5M20.5 43H22.5" fill="none" stroke="#304070" stroke-width="1" /><rect x="22.5" y="34.5" width="6.5" height="2" fill="#a8c8f0" stroke="#5070a0" stroke-width="1" /><rect x="22.5" y="38.5" width="6.5" height="2" fill="#a8c8f0" stroke="#5070a0" stroke-width="1" /><rect x="22.5" y="42.5" width="6.5" height="2" fill="#a8c8f0" stroke="#5070a0" stroke-width="1" /><rect x="41.5" y="30.5" width="7" height="2" fill="#f0f0f0" stroke="#a8a8a8" stroke-width="1" /><path d="M45.5 33V43.5" fill="none" stroke="#a8a8a8" stroke-width="1" /><rect x="47.5" y="34.5" width="6.5" height="2" fill="#f0f0f0" stroke="#a8a8a8" stroke-width="1" /><rect x="47.5" y="38.5" width="6.5" height="2" fill="#f0f0f0" stroke="#a8a8a8" stroke-width="1" /><rect x="47.5" y="42.5" width="6.5" height="2" fill="#f0f0f0" stroke="#a8a8a8" stroke-width="1" /><path d="M38 37.5H42M40.5 35.5L43 37.5L40.5 39.5Z" fill="#909090" stroke="#909090" stroke-width="1.5" /><rect x="68.5" y="30.5" width="13" height="13" fill="#f8f8f8" stroke="#8a8a8a" stroke-width="1" /><path d="M71 33L79 41M79 33L71 41" fill="none" stroke="#8a8a8a" stroke-width="2" /><path d="M97.5 43.5L102 39" fill="none" stroke="#e06a1a" stroke-width="3" stroke-linecap="round"/><circle cx="105.5" cy="35.5" r="4.5" fill="#b8ccf0" stroke="#f0a070" stroke-width="1"/><rect x="133" y="30" width="14" height="14" fill="#7a7a7a" stroke="none" stroke-width="1" rx="0.5"/><rect x="137" y="30" width="7" height="5" fill="#e8e8e8" stroke="none" stroke-width="1" /><rect x="141" y="31" width="1.5" height="3" fill="#7a7a7a" stroke="none" stroke-width="1" /><rect x="135.5" y="37" width="9" height="6.5" fill="#e4e4e4" stroke="none" stroke-width="1" /><path d="M158 38 A5 5 0 0 1 166 33 M168 37 A5 5 0 0 1 160 42" fill="none" stroke="#7a7a7a" stroke-width="2" /><path d="M165 31L168 34L164 35Z M161 44L158 41L162 40Z" fill="#7a7a7a" stroke="none" stroke-width="1" /><path d="M183 36 Q188 31 192 38" fill="none" stroke="#7a7a7a" stroke-width="1.8" /><path d="M180.5 37.5L184.5 33.5L185 38Z" fill="#7a7a7a" stroke="none" stroke-width="1" /><path d="M212 34 Q216 29 220 33 Q222 35 221 38" fill="none" stroke="#2020e0" stroke-width="2" /><path d="M209 35L213.5 31.5L214 36.5Z" fill="#2020e0" stroke="none" stroke-width="1" /><rect x="213.5" y="37.5" width="9" height="7" fill="#fff" stroke="#5070b0" stroke-width="1" /><path d="M215 39.5L221 43M221 39.5L215 43M218 39V43.5" fill="none" stroke="#000" stroke-width="0.9" /><rect x="237" y="32" width="12" height="4" fill="#7a7a7a" stroke="none" stroke-width="1" /><rect x="238" y="36" width="10" height="9" fill="#a8a8a8" stroke="#7a7a7a" stroke-width="1" /><path d="M238 39H248M238 42H248" fill="none" stroke="#7a7a7a" stroke-width="1" /><rect x="245" y="29" width="8" height="8" fill="#909090" stroke="none" stroke-width="1" rx="0.8"/><path d="M249 30.2V35.8M246.2 33H251.8M247 31L251 35M251 31L247 35" fill="none" stroke="#fff" stroke-width="0.9" /><circle cx="249" cy="33" r="1.9" fill="#fff"/><circle cx="249" cy="33" r="0.9" fill="#909090"/><rect x="260" y="33" width="12" height="4" fill="#a8a8a8" stroke="#7a7a7a" stroke-width="1" /><rect x="261" y="37" width="10" height="8" fill="#e8e8e8" stroke="#7a7a7a" stroke-width="1" /><rect x="261" y="37" width="10" height="3" fill="#7a7a7a" stroke="none" stroke-width="1" /><rect x="268" y="29" width="8" height="8" fill="#909090" stroke="none" stroke-width="1" rx="0.8"/><path d="M272 30.2V35.8M269.2 33H274.8M270 31L274 35M274 31L270 35" fill="none" stroke="#fff" stroke-width="0.9" /><circle cx="272" cy="33" r="1.9" fill="#fff"/><circle cx="272" cy="33" r="0.9" fill="#909090"/><path d="M282.5 32.5H293V40.5H290L287 44V40.5H282.5Z" fill="#f0f0f0" stroke="#a8a8a8" stroke-width="1" /><rect x="291" y="29" width="8" height="8" fill="#909090" stroke="none" stroke-width="1" rx="0.8"/><path d="M295 30.2V35.8M292.2 33H297.8M293 31L297 35M297 31L293 35" fill="none" stroke="#fff" stroke-width="0.9" /><circle cx="295" cy="33" r="1.9" fill="#fff"/><circle cx="295" cy="33" r="0.9" fill="#909090"/><path d="M311 37 Q318 32 327 37 Q320 45 311 37Z" fill="#a8a8a8" stroke="#7a7a7a" stroke-width="1" /><rect x="316" y="32" width="6" height="3" fill="#7a7a7a" stroke="none" stroke-width="1" /><path d="M326 35V43" fill="none" stroke="#404040" stroke-width="1" /><rect x="338" y="31" width="10" height="10" fill="#b0b0b0" stroke="#7a7a7a" stroke-width="1" /><rect x="334" y="36" width="6" height="8" fill="#909090" stroke="#7a7a7a" stroke-width="1" /><rect x="344" y="40" width="6" height="4" fill="#a8a8a8" stroke="#7a7a7a" stroke-width="1" /><path d="M366 32L377 43M377 32L366 43" fill="none" stroke="#a0a0a0" stroke-width="1.5" /><rect x="394" y="29.5" width="10" height="12" fill="#d0d0d0" stroke="#7a7a7a" stroke-width="1" /><rect x="395.5" y="31" width="7" height="2" fill="#7a7a7a" stroke="none" stroke-width="1" /><ellipse cx="393" cy="41" rx="3.5" ry="1.5" fill="#a8a8a8" stroke="#7a7a7a"/><ellipse cx="393" cy="43.5" rx="3.5" ry="1.5" fill="#a8a8a8" stroke="#7a7a7a"/><ellipse cx="405" cy="41" rx="3.5" ry="1.5" fill="#a8a8a8" stroke="#7a7a7a"/><ellipse cx="405" cy="43.5" rx="3.5" ry="1.5" fill="#a8a8a8" stroke="#7a7a7a"/><path d="M417.5 33.5L420 30.5H429.5V44.5H417.5Z" fill="#f4f4f4" stroke="#a8a8a8" stroke-width="1" /><rect x="424.5" y="29.5" width="6" height="8" fill="#f4f4f4" stroke="#a8a8a8" stroke-width="1" /><path d="M416 39H422M419 36V42" fill="none" stroke="#7a7a7a" stroke-width="2" /><rect x="422" y="42" width="5" height="1.5" fill="#7a7a7a" stroke="none" stroke-width="1" /><path d="M445 31V37M442 34H448" fill="none" stroke="#606060" stroke-width="2.5" /><rect x="442" y="40" width="6" height="2" fill="#a8a8a8" stroke="none" stroke-width="1" /><path d="M471 30L477 40M478 30L472 40" fill="none" stroke="#a8a8a8" stroke-width="1" /><circle cx="471" cy="42" r="2" fill="none" stroke="#888" stroke-width="1.2"/><circle cx="478" cy="42" r="2" fill="none" stroke="#888" stroke-width="1.2"/><path d="M490.5 32.5H498V41.5H490.5Z" fill="#f4f4f4" stroke="#a8a8a8" stroke-width="1" /><path d="M497.5 35.5H505.5V44.5H497.5Z" fill="#f4f4f4" stroke="#7a7a7a" stroke-width="1" /><path d="M499.5 38.5H504M499.5 40.5H504M499.5 42.5H504" fill="none" stroke="#a8a8a8" stroke-width="1" /><rect x="513" y="32" width="15" height="11" fill="#a8a8a8" stroke="#909090" stroke-width="1" rx="1"/><rect x="517" y="30" width="7" height="3" fill="#c0c0c0" stroke="#909090" stroke-width="1" /><path d="M518.5 35.5H526.5V44.5H518.5Z" fill="#f0f0f0" stroke="#7a7a7a" stroke-width="1" /><path d="M520 38.5H525M520 40.5H525M520 42.5H525" fill="none" stroke="#a8a8a8" stroke-width="1" /><path d="M660.5 31.5H669.5V41.5H660.5Z" fill="#f8f8f8" stroke="#a8a8a8" stroke-width="1.2" /><path d="M666.5 33.5H675.5V43.5H666.5Z" fill="#f8f8f8" stroke="#a8a8a8" stroke-width="1.2" /><rect x="683.5" y="30.5" width="15" height="12" fill="#ffc020" stroke="#c89040" stroke-width="1" rx="1.5"/><rect x="688" y="29" width="6" height="3" fill="#f0e080" stroke="#c0a040" stroke-width="1" rx="1"/><path d="M687.5 34.5H695.5V44.5H687.5Z" fill="#d0f0f0" stroke="#70a0a8" stroke-width="1" /><rect x="742.5" y="30.5" width="15" height="13" fill="#fff" stroke="#6080b0" stroke-width="1" /><rect x="742" y="29" width="8" height="8" fill="#f08020" stroke="none" stroke-width="1" rx="0.8"/><path d="M746 30.2V35.8M743.2 33H748.8M744 31L748 35M748 31L744 35" fill="none" stroke="#fff" stroke-width="0.9" /><circle cx="746" cy="33" r="1.9" fill="#fff"/><circle cx="746" cy="33" r="0.9" fill="#f08020"/><text x="750" y="42.5" font-family="Liberation Sans" font-size="9" text-anchor="middle" fill="#000">ЛС</text><rect x="765.5" y="30.5" width="15" height="13" fill="#fff" stroke="#a0a0a0" stroke-width="1" /><rect x="765" y="29" width="8" height="8" fill="#a0a0a0" stroke="none" stroke-width="1" rx="0.8"/><path d="M769 30.2V35.8M766.2 33H771.8M767 31L771 35M771 31L767 35" fill="none" stroke="#fff" stroke-width="0.9" /><circle cx="769" cy="33" r="1.9" fill="#fff"/><circle cx="769" cy="33" r="0.9" fill="#a0a0a0"/><text x="777" y="42.5" font-family="Liberation Sans" font-size="9" text-anchor="middle" fill="#000">Р</text><rect x="788.5" y="30.5" width="15" height="13" fill="#fff" stroke="#a0a0a0" stroke-width="1" /><rect x="788" y="29" width="8" height="8" fill="#a0a0a0" stroke="none" stroke-width="1" rx="0.8"/><path d="M792 30.2V35.8M789.2 33H794.8M790 31L794 35M794 31L790 35" fill="none" stroke="#fff" stroke-width="0.9" /><circle cx="792" cy="33" r="1.9" fill="#fff"/><circle cx="792" cy="33" r="0.9" fill="#a0a0a0"/><text x="796" y="42.5" font-family="Liberation Sans" font-size="9" text-anchor="middle" fill="#000">ПР</text><rect x="817.5" y="30.5" width="7" height="2" fill="#f0f0f0" stroke="#a8a8a8" stroke-width="1" /><path d="M821.5 33V43.5" fill="none" stroke="#a8a8a8" stroke-width="1" /><rect x="823.5" y="34.5" width="6" height="2" fill="#f0f0f0" stroke="#a8a8a8" stroke-width="1" /><rect x="823.5" y="38.5" width="6" height="2" fill="#f0f0f0" stroke="#a8a8a8" stroke-width="1" /><rect x="823.5" y="42.5" width="6" height="2" fill="#f0f0f0" stroke="#a8a8a8" stroke-width="1" /><path d="M826 36L832 30" fill="none" stroke="#7a7a7a" stroke-width="1.5" /><rect x="840.5" y="30.5" width="7" height="2" fill="#f0f0f0" stroke="#a8a8a8" stroke-width="1" /><path d="M844.5 33V43.5" fill="none" stroke="#a8a8a8" stroke-width="1" /><rect x="846.5" y="34.5" width="6" height="2" fill="#f0f0f0" stroke="#a8a8a8" stroke-width="1" /><rect x="846.5" y="38.5" width="6" height="2" fill="#f0f0f0" stroke="#a8a8a8" stroke-width="1" /><rect x="846.5" y="42.5" width="6" height="2" fill="#f0f0f0" stroke="#a8a8a8" stroke-width="1" /><path d="M852 31L857 36M857 31L852 36" fill="none" stroke="#7a7a7a" stroke-width="1" /><path d="M880 33.5H892" fill="none" stroke="#606080" stroke-width="1" /><path d="M880 36.5H892" fill="none" stroke="#606080" stroke-width="1" /><path d="M880 39.5H892" fill="none" stroke="#606080" stroke-width="1" /><path d="M880 42.5H892" fill="none" stroke="#606080" stroke-width="1" /><path d="M876 33.5H880M879 31L882 33.5L879 36Z" fill="#1030e0" stroke="#1030e0" stroke-width="1.5" /><path d="M903 33.5H915" fill="none" stroke="#606080" stroke-width="1" /><path d="M903 36.5H915" fill="none" stroke="#606080" stroke-width="1" /><path d="M903 39.5H915" fill="none" stroke="#606080" stroke-width="1" /><path d="M903 42.5H915" fill="none" stroke="#606080" stroke-width="1" /><path d="M902 38V33M899 33L902 30L905 33Z" fill="#1030e0" stroke="#1030e0" stroke-width="1.5" /><path d="M926 33.5H938" fill="none" stroke="#606080" stroke-width="1" /><path d="M926 36.5H938" fill="none" stroke="#606080" stroke-width="1" /><path d="M926 39.5H938" fill="none" stroke="#606080" stroke-width="1" /><path d="M926 42.5H938" fill="none" stroke="#606080" stroke-width="1" /><path d="M925 38V43M922 41L925 45L928 41Z" fill="#1030e0" stroke="#1030e0" stroke-width="1.5" /><path d="M949 33.5H961" fill="none" stroke="#606080" stroke-width="1" /><path d="M949 36.5H961" fill="none" stroke="#606080" stroke-width="1" /><path d="M949 39.5H961" fill="none" stroke="#606080" stroke-width="1" /><path d="M949 42.5H961" fill="none" stroke="#606080" stroke-width="1" /><path d="M945 42H949M948 39.5L951 42L948 44.5Z" fill="#1030e0" stroke="#1030e0" stroke-width="1.5" /><path d="M991 31.5 A6.5 6.5 0 1 1 985.5 41.5" fill="none" stroke="#90b0b0" stroke-width="1.6" /><path d="M983 44L986.5 40.5" fill="none" stroke="#d07020" stroke-width="2" /><path d="M987.5 35L995.5 43" fill="none" stroke="#e08a30" stroke-width="1.8" /><path d="M984 36L989.5 30.5" fill="none" stroke="#506868" stroke-width="2.6" /><rect x="1004" y="36" width="11" height="5" fill="#2a7ae0" stroke="none" stroke-width="1" rx="1"/><rect x="1015" y="35" width="5" height="6" fill="#f0a020" stroke="none" stroke-width="1" rx="1"/><rect x="1016" y="36" width="3" height="2" fill="#d0e8f0" stroke="none" stroke-width="1" /><circle cx="1007" cy="42" r="1.6" fill="#202020"/><circle cx="1017" cy="42" r="1.6" fill="#202020"/><ellipse cx="1030" cy="39.5" rx="3" ry="1.6" fill="#f07010" stroke="#c05000" stroke-width="0.5"/><ellipse cx="1034" cy="39.5" rx="3" ry="1.6" fill="#f07010" stroke="#c05000" stroke-width="0.5"/><ellipse cx="1038" cy="39.5" rx="3" ry="1.6" fill="#f07010" stroke="#c05000" stroke-width="0.5"/><ellipse cx="1032" cy="37.0" rx="3" ry="1.6" fill="#f07010" stroke="#c05000" stroke-width="0.5"/><ellipse cx="1036" cy="37.0" rx="3" ry="1.6" fill="#f07010" stroke="#c05000" stroke-width="0.5"/><ellipse cx="1034" cy="34.5" rx="3" ry="1.6" fill="#f07010" stroke="#c05000" stroke-width="0.5"/><rect x="1053.5" y="29.5" width="11" height="15" fill="#5c9ca8" stroke="#407880" stroke-width="1" rx="1.5"/><rect x="1055" y="31" width="8" height="2.5" fill="#203840" stroke="none" stroke-width="1" /><rect x="1055.5" y="35.0" width="1.6" height="1.6" fill="#fff" stroke="none" stroke-width="1" /><rect x="1058.0" y="35.0" width="1.6" height="1.6" fill="#fff" stroke="none" stroke-width="1" /><rect x="1060.5" y="35.0" width="1.6" height="1.6" fill="#fff" stroke="none" stroke-width="1" /><rect x="1055.5" y="37.6" width="1.6" height="1.6" fill="#fff" stroke="none" stroke-width="1" /><rect x="1058.0" y="37.6" width="1.6" height="1.6" fill="#fff" stroke="none" stroke-width="1" /><rect x="1060.5" y="37.6" width="1.6" height="1.6" fill="#fff" stroke="none" stroke-width="1" /><rect x="1055.5" y="40.2" width="1.6" height="1.6" fill="#fff" stroke="none" stroke-width="1" /><rect x="1058.0" y="40.2" width="1.6" height="1.6" fill="#fff" stroke="none" stroke-width="1" /><rect x="1060.5" y="40.2" width="1.6" height="1.6" fill="#fff" stroke="none" stroke-width="1" /><rect x="1079" y="36" width="11" height="5" fill="#2a7ae0" stroke="none" stroke-width="1" rx="1"/><rect x="1090" y="35" width="5" height="6" fill="#f0a020" stroke="none" stroke-width="1" rx="1"/><rect x="1091" y="36" width="3" height="2" fill="#d0e8f0" stroke="none" stroke-width="1" /><circle cx="1082" cy="42" r="1.6" fill="#202020"/><circle cx="1092" cy="42" r="1.6" fill="#202020"/><ellipse cx="1084" cy="35" rx="4" ry="1.5" fill="#e06010"/><ellipse cx="1086" cy="33.5" rx="2.5" ry="1.2" fill="#f07020"/><path d="M1115 40 L1123 37 L1131 39 L1123 42Z" fill="#fff" stroke="#e04040" stroke-width="1.2" /><path d="M1115 40V42L1123 44.5L1131 41V39" fill="none" stroke="#e04040" stroke-width="1.2" /><path d="M1117 35 L1124 32 L1131 34 L1124 37Z" fill="#e060b0" stroke="#e060b0" stroke-width="1" /><path d="M1117 35V37L1124 39.5L1131 36V34" fill="#fff" stroke="#e060b0" stroke-width="1" /><path d="M1138 40 L1146 37 L1154 39 L1146 42Z" fill="#fff" stroke="#30a0e0" stroke-width="1.2" /><path d="M1138 40V42L1146 44.5L1154 41V39" fill="none" stroke="#30a0e0" stroke-width="1.2" /><path d="M1140 35 L1147 32 L1154 34 L1147 37Z" fill="#3050d0" stroke="#3050d0" stroke-width="1" /><path d="M1140 35V37L1147 39.5L1154 36V34" fill="#fff" stroke="#3050d0" stroke-width="1" /><defs><linearGradient id="gy" x1="0" y1="1" x2="1" y2="0"><stop offset="0.3" stop-color="#ffff00"/><stop offset="1" stop-color="#ff8000"/></linearGradient><linearGradient id="gb" x1="0" y1="1" x2="1" y2="0"><stop offset="0" stop-color="#60ffff"/><stop offset="1" stop-color="#0060ff"/></linearGradient><linearGradient id="gt" x1="0" y1="0" x2="1" y2="1"><stop offset="0" stop-color="#e0fff8"/><stop offset="1" stop-color="#f0f0f0"/></linearGradient><radialGradient id="gr" cx="0.35" cy="0.3" r="0.7"><stop offset="0" stop-color="#ffb0a0"/><stop offset="0.5" stop-color="#f02010"/><stop offset="1" stop-color="#c00000"/></radialGradient></defs><rect x="1544.5" y="4.5" width="16" height="14" fill="#f0f0f0" stroke="#fff" stroke-width="1" /><path d="M1560.5 4.5V18.5H1544.5" fill="none" stroke="#404040" stroke-width="1" /><path d="M1559.5 5.5V17.5H1545.5" fill="none" stroke="#a0a0a0" stroke-width="1" /><rect x="1548" y="13" width="8" height="2" fill="#000" stroke="none" stroke-width="1" /><rect x="1561.5" y="4.5" width="16" height="14" fill="#f0f0f0" stroke="#fff" stroke-width="1" /><path d="M1577.5 4.5V18.5H1561.5" fill="none" stroke="#404040" stroke-width="1" /><path d="M1576.5 5.5V17.5H1562.5" fill="none" stroke="#a0a0a0" stroke-width="1" /><rect x="1567.5" y="6.5" width="6" height="5" fill="none" stroke="#000" stroke-width="1" /><rect x="1567" y="6" width="7" height="2" fill="#000" stroke="none" stroke-width="1" /><rect x="1564.5" y="9.5" width="6" height="5" fill="#f0f0f0" stroke="#000" stroke-width="1" /><rect x="1564" y="9" width="7" height="2" fill="#000" stroke="none" stroke-width="1" /><rect x="1580.5" y="4.5" width="16" height="14" fill="#f0f0f0" stroke="#fff" stroke-width="1" /><path d="M1596.5 4.5V18.5H1580.5" fill="none" stroke="#404040" stroke-width="1" /><path d="M1595.5 5.5V17.5H1581.5" fill="none" stroke="#a0a0a0" stroke-width="1" /><path d="M1584.5 7.5L1591.5 14.5M1591.5 7.5L1584.5 14.5" fill="none" stroke="#000" stroke-width="2" /><path d="M115.5 110.5V108.5H122L123 110.5" fill="#ffd860" stroke="#a09060" stroke-width="1" /><rect x="115.5" y="110.5" width="15" height="11" fill="#ffd860" stroke="#a09060" stroke-width="1" /><path d="M119 116L121.5 113.5L124 116M121.5 114V119H127" fill="none" stroke="#000" stroke-width="1.2" /><path d="M138.5 110.5V108.5H145L146 110.5" fill="#90f070" stroke="#a08890" stroke-width="1" /><rect x="138.5" y="110.5" width="15" height="11" fill="#90f070" stroke="#a08890" stroke-width="1" /><rect x="143" y="115" width="5" height="1.5" fill="#303030" stroke="none" stroke-width="1" /><path d="M177 117 A6 6 0 0 1 185 110.5 M187 113 A6 6 0 0 1 179 119.5" fill="none" stroke="#20a020" stroke-width="2.2" /><path d="M184 108L188 111.5L183 112.5Z M180 122L176 118.5L181 117.5Z" fill="#20a020" stroke="none" stroke-width="1" /><path d="M204.5 115L211.5 108.5L218.5 115" fill="none" stroke="#d08030" stroke-width="1.2" /><rect x="206.5" y="114.5" width="10" height="8" fill="#fff" stroke="#909090" stroke-width="0.8" /><rect x="207.5" y="117" width="2.5" height="5.5" fill="#f0b030" stroke="#c08040" stroke-width="0.5" /><rect x="212" y="117" width="2.5" height="2.5" fill="#4090f0" stroke="none" stroke-width="1" /><rect x="206" y="108.5" width="2" height="4" fill="#d08030" stroke="none" stroke-width="1" /><path d="M204 122.5H219" fill="none" stroke="#808080" stroke-width="1" /><rect x="212" y="108" width="8" height="8" fill="#f08020" stroke="none" stroke-width="1" rx="0.8"/><path d="M216 109.2V114.8M213.2 112H218.8M214 110L218 114M218 110L214 114" fill="none" stroke="#fff" stroke-width="0.9" /><circle cx="216" cy="112" r="1.9" fill="#fff"/><circle cx="216" cy="112" r="0.9" fill="#f08020"/><path d="M230 113L234.5 108.5L239 113" fill="none" stroke="#a05020" stroke-width="1.2" /><rect x="231" y="112.5" width="7" height="5" fill="#fff" stroke="#c0c0c0" stroke-width="0.7" /><rect x="235" y="114" width="2" height="2" fill="#80b0f0" stroke="none" stroke-width="1" /><path d="M226 119L229.5 115.5L233 119" fill="none" stroke="#a05020" stroke-width="1.1" /><rect x="227" y="119" width="5" height="4" fill="#fff" stroke="#c0c0c0" stroke-width="0.6" /><rect x="228.5" y="120" width="1.5" height="3" fill="#d0a040" stroke="none" stroke-width="1" /><path d="M235 119L238.5 115.5L242 119" fill="none" stroke="#a05020" stroke-width="1.1" /><rect x="236" y="119" width="5" height="4" fill="#fff" stroke="#c0c0c0" stroke-width="0.6" /><rect x="237.5" y="120" width="1.5" height="3" fill="#d0a040" stroke="none" stroke-width="1" /><rect x="255.5" y="108.5" width="15" height="13" fill="#fff" stroke="#6080b0" stroke-width="1" /><rect x="255" y="107" width="8" height="8" fill="#f08020" stroke="none" stroke-width="1" rx="0.8"/><path d="M259 108.2V113.8M256.2 111H261.8M257 109L261 113M261 109L257 113" fill="none" stroke="#fff" stroke-width="0.9" /><circle cx="259" cy="111" r="1.9" fill="#fff"/><circle cx="259" cy="111" r="0.9" fill="#f08020"/><text x="263" y="120.5" font-family="Liberation Sans" font-size="9" text-anchor="middle" fill="#000">ЛС</text><rect x="278.5" y="108.5" width="15" height="13" fill="#fff" stroke="#a0a0a0" stroke-width="1" /><rect x="278" y="107" width="8" height="8" fill="#a0a0a0" stroke="none" stroke-width="1" rx="0.8"/><path d="M282 108.2V113.8M279.2 111H284.8M280 109L284 113M284 109L280 113" fill="none" stroke="#fff" stroke-width="0.9" /><circle cx="282" cy="111" r="1.9" fill="#fff"/><circle cx="282" cy="111" r="0.9" fill="#a0a0a0"/><text x="290" y="120.5" font-family="Liberation Sans" font-size="9" text-anchor="middle" fill="#000">Р</text><rect x="301.5" y="108.5" width="15" height="13" fill="#fff" stroke="#a0a0a0" stroke-width="1" /><rect x="301" y="107" width="8" height="8" fill="#a0a0a0" stroke="none" stroke-width="1" rx="0.8"/><path d="M305 108.2V113.8M302.2 111H307.8M303 109L307 113M307 109L303 113" fill="none" stroke="#fff" stroke-width="0.9" /><circle cx="305" cy="111" r="1.9" fill="#fff"/><circle cx="305" cy="111" r="0.9" fill="#a0a0a0"/><text x="309" y="120.5" font-family="Liberation Sans" font-size="9" text-anchor="middle" fill="#000">ПР</text><path d="M333.5 122V112M329 115.5L333.5 110L338 115.5Z" fill="#a0a0a0" stroke="#a0a0a0" stroke-width="2.5" /><path d="M356.5 109V119M352 115.5L356.5 121L361 115.5Z" fill="#a0a0a0" stroke="#a0a0a0" stroke-width="2.5" /><rect x="376.5" y="109.5" width="14" height="12" fill="#40b0a0" stroke="#507070" stroke-width="1" /><rect x="378.5" y="108" width="13" height="11" fill="#60c8b0" stroke="#507070" stroke-width="0.6" /><text x="384.5" y="119" font-family="Liberation Sans" font-size="9" font-weight="bold" text-anchor="middle" fill="#fff">%</text><rect x="385" y="107" width="8" height="8" fill="#f08020" stroke="none" stroke-width="1" rx="0.8"/><path d="M389 108.2V113.8M386.2 111H391.8M387 109L391 113M391 109L387 113" fill="none" stroke="#fff" stroke-width="0.9" /><circle cx="389" cy="111" r="1.9" fill="#fff"/><circle cx="389" cy="111" r="0.9" fill="#f08020"/><rect x="405.5" y="109.5" width="15" height="12" fill="#e8fff4" stroke="#909090" stroke-width="1" /><text x="413" y="119.5" font-family="Liberation Sans" font-size="9" text-anchor="middle" fill="#202020">%</text><rect x="414" y="107" width="8" height="8" fill="#f08020" stroke="none" stroke-width="1" rx="0.8"/><path d="M418 108.2V113.8M415.2 111H420.8M416 109L420 113M420 109L416 113" fill="none" stroke="#fff" stroke-width="0.9" /><circle cx="418" cy="111" r="1.9" fill="#fff"/><circle cx="418" cy="111" r="0.9" fill="#f08020"/><rect x="428.5" y="109.5" width="15" height="12" fill="#e8ffe0" stroke="#909090" stroke-width="1" /><text x="436" y="119.5" font-family="Liberation Sans" font-size="7.5" text-anchor="middle" fill="#202020">M29</text><rect x="437" y="107" width="8" height="8" fill="#f08020" stroke="none" stroke-width="1" rx="0.8"/><path d="M441 108.2V113.8M438.2 111H443.8M439 109L443 113M443 109L439 113" fill="none" stroke="#fff" stroke-width="0.9" /><circle cx="441" cy="111" r="1.9" fill="#fff"/><circle cx="441" cy="111" r="0.9" fill="#f08020"/><rect x="451.5" y="109.5" width="15" height="12" fill="#e8f0ff" stroke="#909090" stroke-width="1" /><text x="459" y="119.5" font-family="Liberation Sans" font-size="9" text-anchor="middle" fill="#202020">РР</text><rect x="460" y="107" width="8" height="8" fill="#f08020" stroke="none" stroke-width="1" rx="0.8"/><path d="M464 108.2V113.8M461.2 111H466.8M462 109L466 113M466 109L462 113" fill="none" stroke="#fff" stroke-width="0.9" /><circle cx="464" cy="111" r="1.9" fill="#fff"/><circle cx="464" cy="111" r="0.9" fill="#f08020"/><rect x="474.5" y="109.5" width="15" height="12" fill="#e8ffe8" stroke="#909090" stroke-width="1" /><text x="482" y="119.5" font-family="Liberation Sans" font-size="9" text-anchor="middle" fill="#202020">ФЗ</text><rect x="483" y="107" width="8" height="8" fill="#f08020" stroke="none" stroke-width="1" rx="0.8"/><path d="M487 108.2V113.8M484.2 111H489.8M485 109L489 113M489 109L485 113" fill="none" stroke="#fff" stroke-width="0.9" /><circle cx="487" cy="111" r="1.9" fill="#fff"/><circle cx="487" cy="111" r="0.9" fill="#f08020"/><path d="M503.5 111.5V109.5H510L511 111.5" fill="#b8b8b8" stroke="#909090" stroke-width="1" /><rect x="503.5" y="111.5" width="15" height="10" fill="#b8b8b8" stroke="#909090" stroke-width="1" /><rect x="511" y="107" width="8" height="8" fill="#a0a0a0" stroke="none" stroke-width="1" rx="0.8"/><path d="M515 108.2V113.8M512.2 111H517.8M513 109L517 113M517 109L513 113" fill="none" stroke="#fff" stroke-width="0.9" /><circle cx="515" cy="111" r="1.9" fill="#fff"/><circle cx="515" cy="111" r="0.9" fill="#a0a0a0"/><path d="M535 109.5L545.5 120M545.5 109.5L535 120" fill="none" stroke="#f04828" stroke-width="1.6" /><path d="M25 168L29 156L33 168Z" fill="#2a70d0" stroke="#2050a0" stroke-width="0.6" /><rect x="33" y="161" width="7" height="7" fill="#70c040" stroke="#50a030" stroke-width="0.6" /><circle cx="31.5" cy="165" r="3.6" fill="url(#gr)"/><path d="M44.5 173V171.5H51L52 173" fill="#ffe040" stroke="#c0b080" stroke-width="1" /><rect x="44.5" y="173.5" width="15" height="11" fill="url(#gy)" stroke="#a0a0b0" stroke-width="1" /><path d="M44.5 189V187.5H51L52 189" fill="#ffe040" stroke="#c0b080" stroke-width="1" /><rect x="44.5" y="189.5" width="15" height="11" fill="url(#gy)" stroke="#a0a0b0" stroke-width="1" /><path d="M44.5 210L51.5 203.5L58.5 210" fill="none" stroke="#d08030" stroke-width="1.2" /><rect x="46.5" y="209.5" width="10" height="8" fill="#fff" stroke="#909090" stroke-width="0.8" /><rect x="47.5" y="212" width="2.5" height="5.5" fill="#f0b030" stroke="#c08040" stroke-width="0.5" /><rect x="52" y="212" width="2.5" height="2.5" fill="#4090f0" stroke="none" stroke-width="1" /><rect x="46" y="203.5" width="2" height="4" fill="#d08030" stroke="none" stroke-width="1" /><path d="M44 217.5H59" fill="none" stroke="#808080" stroke-width="1" /><path d="M44.5 226L51.5 219.5L58.5 226" fill="none" stroke="#d08030" stroke-width="1.2" /><rect x="46.5" y="225.5" width="10" height="8" fill="#fff" stroke="#909090" stroke-width="0.8" /><rect x="47.5" y="228" width="2.5" height="5.5" fill="#f0b030" stroke="#c08040" stroke-width="0.5" /><rect x="52" y="228" width="2.5" height="2.5" fill="#4090f0" stroke="none" stroke-width="1" /><rect x="46" y="219.5" width="2" height="4" fill="#d08030" stroke="none" stroke-width="1" /><path d="M44 233.5H59" fill="none" stroke="#808080" stroke-width="1" /><path d="M63.5 237V235.5H70L71 237" fill="#40c0ff" stroke="#a0a0b0" stroke-width="1" /><rect x="63.5" y="237.5" width="15" height="11" fill="url(#gb)" stroke="#a09090" stroke-width="1" /><path d="M63.5 253V251.5H70L71 253" fill="#40c0ff" stroke="#a0a0b0" stroke-width="1" /><rect x="63.5" y="253.5" width="15" height="11" fill="url(#gb)" stroke="#a09090" stroke-width="1" /><path d="M63.5 269V267.5H70L71 269" fill="#40c0ff" stroke="#a0a0b0" stroke-width="1" /><rect x="63.5" y="269.5" width="15" height="11" fill="url(#gb)" stroke="#a09090" stroke-width="1" /><rect x="82.5" y="283.5" width="15" height="14" fill="#fff" stroke="#b0b0b0" stroke-width="1" /><rect x="83" y="285" width="14" height="6" fill="#d8f0ff" stroke="none" stroke-width="1" /><text x="81" y="295" font-family="Liberation Sans" font-size="9" textLength="17" lengthAdjust="spacingAndGlyphs" fill="#202020">КС-6</text><rect x="82.5" y="300.5" width="15" height="13" fill="url(#gt)" stroke="#a0a0a0" stroke-width="1" /><text x="85" y="307" font-family="Liberation Sans" font-size="6.5" fill="#202020">0</text><path d="M91 302L89 312" fill="none" stroke="#303030" stroke-width="1" /><text x="91" y="312" font-family="Liberation Sans" font-size="6.5" fill="#202020">0</text><rect x="101.5" y="316.5" width="15" height="13" fill="url(#gt)" stroke="#a0a0a0" stroke-width="1" /><text x="104" y="323" font-family="Liberation Sans" font-size="6.5" fill="#202020">0</text><path d="M110 318L108 328" fill="none" stroke="#303030" stroke-width="1" /><text x="110" y="328" font-family="Liberation Sans" font-size="6.5" fill="#202020">0</text><rect x="120.5" y="332.5" width="15" height="13" fill="url(#gt)" stroke="#a0a0a0" stroke-width="1" /><text x="123" y="339" font-family="Liberation Sans" font-size="6.5" fill="#202020">0</text><path d="M129 334L127 344" fill="none" stroke="#303030" stroke-width="1" /><text x="129" y="344" font-family="Liberation Sans" font-size="6.5" fill="#202020">0</text><path d="M63.5 349V347.5H70L71 349" fill="#40c0ff" stroke="#a0a0b0" stroke-width="1" /><rect x="63.5" y="349.5" width="15" height="11" fill="url(#gb)" stroke="#a09090" stroke-width="1" /><path d="M63.5 365V363.5H70L71 365" fill="#40c0ff" stroke="#a0a0b0" stroke-width="1" /><rect x="63.5" y="365.5" width="15" height="11" fill="url(#gb)" stroke="#a09090" stroke-width="1" /><path d="M63.5 381V379.5H70L71 381" fill="#40c0ff" stroke="#a0a0b0" stroke-width="1" /><rect x="63.5" y="381.5" width="15" height="11" fill="url(#gb)" stroke="#a09090" stroke-width="1" /><rect x="46.5" y="395.5" width="11" height="8" fill="#ffe060" stroke="#a0a0c0" stroke-width="0.8" /><path d="M44 402Q48 410 56 407Q59 404 57 402Q50 406 44 402Z" fill="#f09040" stroke="#d07030" stroke-width="0.6" /><path d="M59.5 401V409" fill="none" stroke="#202020" stroke-width="0.8" /><path d="M49 413Q51.5 410 54 413" fill="#c8e0ff" stroke="#a0b8d0" stroke-width="1" /><rect x="48" y="413" width="7.5" height="12" fill="#506070" stroke="none" stroke-width="1" /><path d="M46 418H57M47 425H56" fill="none" stroke="#506070" stroke-width="1" /><rect x="49.5" y="415" width="1" height="1" fill="#e0e8f0" stroke="none" stroke-width="1" /><rect x="51.5" y="415" width="1" height="1" fill="#e0e8f0" stroke="none" stroke-width="1" /><rect x="53.5" y="415" width="1" height="1" fill="#e0e8f0" stroke="none" stroke-width="1" /><rect x="49.5" y="417" width="1" height="1" fill="#e0e8f0" stroke="none" stroke-width="1" /><rect x="51.5" y="417" width="1" height="1" fill="#e0e8f0" stroke="none" stroke-width="1" /><rect x="53.5" y="417" width="1" height="1" fill="#e0e8f0" stroke="none" stroke-width="1" /><rect x="49.5" y="419" width="1" height="1" fill="#e0e8f0" stroke="none" stroke-width="1" /><rect x="51.5" y="419" width="1" height="1" fill="#e0e8f0" stroke="none" stroke-width="1" /><rect x="53.5" y="419" width="1" height="1" fill="#e0e8f0" stroke="none" stroke-width="1" /><rect x="49.5" y="421" width="1" height="1" fill="#e0e8f0" stroke="none" stroke-width="1" /><rect x="51.5" y="421" width="1" height="1" fill="#e0e8f0" stroke="none" stroke-width="1" /><rect x="53.5" y="421" width="1" height="1" fill="#e0e8f0" stroke="none" stroke-width="1" /><rect x="49.5" y="423" width="1" height="1" fill="#e0e8f0" stroke="none" stroke-width="1" /><rect x="51.5" y="423" width="1" height="1" fill="#e0e8f0" stroke="none" stroke-width="1" /><rect x="53.5" y="423" width="1" height="1" fill="#e0e8f0" stroke="none" stroke-width="1" /><path d="M876.5 307V305.5H883L884 307" fill="#ffe040" stroke="#c0b080" stroke-width="1" /><rect x="876.5" y="307.5" width="15" height="11" fill="url(#gy)" stroke="#a0a0b0" stroke-width="1" /><path d="M876.5 371V369.5H883L884 371" fill="#ffe040" stroke="#c0b080" stroke-width="1" /><rect x="876.5" y="371.5" width="15" height="11" fill="url(#gy)" stroke="#a0a0b0" stroke-width="1" /><path d="M876.5 387V385.5H883L884 387" fill="#ffe040" stroke="#c0b080" stroke-width="1" /><rect x="876.5" y="387.5" width="15" height="11" fill="url(#gy)" stroke="#a0a0b0" stroke-width="1" /><rect x="895.5" y="322.5" width="5" height="12" fill="#e8e8e8" stroke="#808080" stroke-width="1" rx="1.5"/><rect x="900" y="323.5" width="10.5" height="10.5" fill="#eee" stroke="#808080" stroke-width="1" rx="1"/><rect x="901.5" y="325" width="7" height="2" fill="#004848" stroke="none" stroke-width="1" /><rect x="901.5" y="327" width="7" height="5" fill="#808080" stroke="none" stroke-width="1" /><rect x="902.5" y="328" width="1" height="1" fill="#fff" stroke="none" stroke-width="1" /><rect x="904.5" y="328" width="1" height="1" fill="#fff" stroke="none" stroke-width="1" /><rect x="906.5" y="328" width="1" height="1" fill="#fff" stroke="none" stroke-width="1" /><rect x="902.5" y="330.2" width="1" height="1" fill="#fff" stroke="none" stroke-width="1" /><rect x="904.5" y="330.2" width="1" height="1" fill="#fff" stroke="none" stroke-width="1" /><rect x="906.5" y="330.2" width="1" height="1" fill="#fff" stroke="none" stroke-width="1" /><rect x="895.5" y="338.5" width="5" height="12" fill="#e8e8e8" stroke="#808080" stroke-width="1" rx="1.5"/><rect x="900" y="339.5" width="10.5" height="10.5" fill="#eee" stroke="#808080" stroke-width="1" rx="1"/><rect x="901.5" y="341" width="7" height="2" fill="#004848" stroke="none" stroke-width="1" /><rect x="901.5" y="343" width="7" height="5" fill="#808080" stroke="none" stroke-width="1" /><rect x="902.5" y="344" width="1" height="1" fill="#fff" stroke="none" stroke-width="1" /><rect x="904.5" y="344" width="1" height="1" fill="#fff" stroke="none" stroke-width="1" /><rect x="906.5" y="344" width="1" height="1" fill="#fff" stroke="none" stroke-width="1" /><rect x="902.5" y="346.2" width="1" height="1" fill="#fff" stroke="none" stroke-width="1" /><rect x="904.5" y="346.2" width="1" height="1" fill="#fff" stroke="none" stroke-width="1" /><rect x="906.5" y="346.2" width="1" height="1" fill="#fff" stroke="none" stroke-width="1" /><rect x="895.5" y="354.5" width="5" height="12" fill="#e8e8e8" stroke="#808080" stroke-width="1" rx="1.5"/><rect x="900" y="355.5" width="10.5" height="10.5" fill="#eee" stroke="#808080" stroke-width="1" rx="1"/><rect x="901.5" y="357" width="7" height="2" fill="#004848" stroke="none" stroke-width="1" /><rect x="901.5" y="359" width="7" height="5" fill="#808080" stroke="none" stroke-width="1" /><rect x="902.5" y="360" width="1" height="1" fill="#fff" stroke="none" stroke-width="1" /><rect x="904.5" y="360" width="1" height="1" fill="#fff" stroke="none" stroke-width="1" /><rect x="906.5" y="360" width="1" height="1" fill="#fff" stroke="none" stroke-width="1" /><rect x="902.5" y="362.2" width="1" height="1" fill="#fff" stroke="none" stroke-width="1" /><rect x="904.5" y="362.2" width="1" height="1" fill="#fff" stroke="none" stroke-width="1" /><rect x="906.5" y="362.2" width="1" height="1" fill="#fff" stroke="none" stroke-width="1" /></svg>
<div class="a" style="left:89px;top:788px;width:301px;height:24px;border-top:1px solid #a0a0a0;border-left:1px solid #a0a0a0;border-right:1px solid #fff"></div>
<div class="a" style="left:391px;top:788px;width:1174px;height:24px;border-top:1px solid #a0a0a0;border-left:1px solid #a0a0a0;border-right:1px solid #fff"></div>
<div class="a" style="left:1566px;top:788px;width:34px;height:24px;border-top:1px solid #a0a0a0;border-left:1px solid #a0a0a0"></div>
<div class="t" style="left:1568px;top:795px;font-size:11px;line-height:13px;color:#000;width:13px;overflow:hidden">RU</div>
<svg class="a" style="left:1585px;top:797px" width="15" height="15"><path d="M14 1 L1 14 M14 5 L5 14 M14 9 L9 14" stroke="#a0a0a0" stroke-width="1.2"/><path d="M14 2 L2 14 M14 6 L6 14 M14 10 L10 14" stroke="#fff" stroke-width="1"/></svg>
<svg class="a" style="left:0;top:0" width="1600" height="1122"><path d="M1006.75 282.00 L1006.65 283.83 L1006.34 285.65 L1005.82 287.47 L1005.10 289.27 L1004.17 291.07 L1003.04 292.86 L1001.71 294.62 L1000.18 296.37 L998.45 298.09 L996.53 299.79 L994.42 301.47 L992.12 303.11 L989.63 304.72 L986.97 306.30 L984.12 307.83 L981.11 309.33 L977.93 310.79 L974.58 312.20 L971.08 313.56 L967.43 314.88 L963.63 316.15 L959.69 317.36 L955.61 318.52 L951.41 319.62 L947.09 320.66 L942.65 321.65 L938.10 322.57 L933.45 323.43 L928.71 324.23 L923.88 324.96 L918.97 325.63 L913.99 326.22 L908.94 326.75 L903.84 327.22 L898.69 327.61 L893.50 327.93 L888.28 328.18 L883.03 328.36 L877.77 328.46 L872.50 328.50 L867.23 328.46 L861.97 328.36 L856.72 328.18 L851.50 327.93 L846.31 327.61 L841.16 327.22 L836.06 326.75 L831.01 326.22 L826.03 325.63 L821.12 324.96 L816.29 324.23 L811.55 323.43 L806.90 322.57 L802.35 321.65 L797.91 320.66 L793.59 319.62 L789.39 318.52 L785.31 317.36 L781.37 316.15 L777.57 314.88 L773.92 313.56 L770.42 312.20 L767.07 310.79 L763.89 309.33 L760.88 307.83 L758.03 306.30 L755.37 304.72 L752.88 303.11 L750.58 301.47 L748.47 299.79 L746.55 298.09 L744.82 296.37 L743.29 294.62 L741.96 292.86 L740.83 291.07 L739.90 289.27 L739.18 287.47 L738.66 285.65 L738.35 283.83 L738.25 282.00 L738.35 280.17 L738.66 278.35 L739.18 276.53 L739.90 274.73 L740.83 272.93 L741.96 271.14 L743.29 269.38 L744.82 267.63 L746.55 265.91 L748.47 264.21 L750.58 262.53 L752.88 260.89 L755.37 259.28 L758.03 257.70 L760.88 256.17 L763.89 254.67 L767.07 253.21 L770.42 251.80 L773.92 250.44 L777.57 249.12 L781.37 247.85 L785.31 246.64 L789.39 245.48 L793.59 244.38 L797.91 243.34 L802.35 242.35 L806.90 241.43 L811.55 240.57 L816.29 239.77 L821.12 239.04 L826.03 238.37 L831.01 237.78 L836.06 237.25 L841.16 236.78 L846.31 236.39 L851.50 236.07 L856.72 235.82 L861.97 235.64 L867.23 235.54 L872.50 235.50 L877.77 235.54 L883.03 235.64 L888.28 235.82 L893.50 236.07 L898.69 236.39 L903.84 236.78 L908.94 237.25 L913.99 237.78 L918.97 238.37 L923.88 239.04 L928.71 239.77 L933.45 240.57 L938.10 241.43 L942.65 242.35 L947.09 243.34 L951.41 244.38 L955.61 245.48 L959.69 246.64 L963.63 247.85 L967.43 249.12 L971.08 250.44 L974.58 251.80 L977.93 253.21 L981.11 254.67 L984.12 256.17 L986.97 257.70 L989.63 259.28 L992.12 260.89 L994.42 262.53 L996.53 264.21 L998.45 265.91 L1000.18 267.63 L1001.71 269.38 L1003.04 271.14 L1004.17 272.93 L1005.10 274.73 L1005.82 276.53 L1006.34 278.35 L1006.65 280.17Z" fill="none" stroke="#000" stroke-width="4.5" stroke-linejoin="round"/><path d="M1539.75 585.50 L1539.58 586.38 L1539.05 587.41 L1538.19 588.49 L1536.97 589.61 L1535.42 590.75 L1533.53 591.90 L1531.30 593.07 L1528.74 594.25 L1525.86 595.42 L1522.65 596.59 L1519.14 597.76 L1515.32 598.91 L1511.20 600.05 L1506.80 601.18 L1502.11 602.28 L1497.16 603.37 L1491.95 604.43 L1486.49 605.46 L1480.79 606.47 L1474.87 607.44 L1468.74 608.38 L1462.41 609.29 L1455.91 610.16 L1449.23 610.98 L1442.40 611.77 L1435.44 612.51 L1428.35 613.21 L1421.17 613.87 L1413.90 614.48 L1406.57 615.03 L1399.20 615.54 L1391.81 616.00 L1384.42 616.41 L1377.07 616.76 L1369.78 617.06 L1362.59 617.31 L1355.56 617.50 L1348.75 617.64 L1342.31 617.72 L1336.75 617.75 L1331.19 617.72 L1324.75 617.64 L1317.94 617.50 L1310.91 617.31 L1303.72 617.06 L1296.43 616.76 L1289.08 616.41 L1281.69 616.00 L1274.30 615.54 L1266.93 615.03 L1259.60 614.48 L1252.33 613.87 L1245.15 613.21 L1238.06 612.51 L1231.10 611.77 L1224.27 610.98 L1217.59 610.16 L1211.09 609.29 L1204.76 608.38 L1198.63 607.44 L1192.71 606.47 L1187.01 605.46 L1181.55 604.43 L1176.34 603.37 L1171.39 602.28 L1166.70 601.18 L1162.30 600.05 L1158.18 598.91 L1154.36 597.76 L1150.85 596.59 L1147.64 595.42 L1144.76 594.25 L1142.20 593.07 L1139.97 591.90 L1138.08 590.75 L1136.53 589.61 L1135.31 588.49 L1134.45 587.41 L1133.92 586.38 L1133.75 585.50 L1133.92 584.62 L1134.45 583.59 L1135.31 582.51 L1136.53 581.39 L1138.08 580.25 L1139.97 579.10 L1142.20 577.93 L1144.76 576.75 L1147.64 575.58 L1150.85 574.41 L1154.36 573.24 L1158.18 572.09 L1162.30 570.95 L1166.70 569.82 L1171.39 568.72 L1176.34 567.63 L1181.55 566.57 L1187.01 565.54 L1192.71 564.53 L1198.63 563.56 L1204.76 562.62 L1211.09 561.71 L1217.59 560.84 L1224.27 560.02 L1231.10 559.23 L1238.06 558.49 L1245.15 557.79 L1252.33 557.13 L1259.60 556.52 L1266.93 555.97 L1274.30 555.46 L1281.69 555.00 L1289.08 554.59 L1296.43 554.24 L1303.72 553.94 L1310.91 553.69 L1317.94 553.50 L1324.75 553.36 L1331.19 553.28 L1336.75 553.25 L1342.31 553.28 L1348.75 553.36 L1355.56 553.50 L1362.59 553.69 L1369.78 553.94 L1377.07 554.24 L1384.42 554.59 L1391.81 555.00 L1399.20 555.46 L1406.57 555.97 L1413.90 556.52 L1421.17 557.13 L1428.35 557.79 L1435.44 558.49 L1442.40 559.23 L1449.23 560.02 L1455.91 560.84 L1462.41 561.71 L1468.74 562.62 L1474.87 563.56 L1480.79 564.53 L1486.49 565.54 L1491.95 566.57 L1497.16 567.63 L1502.11 568.72 L1506.80 569.82 L1511.20 570.95 L1515.32 572.09 L1519.14 573.24 L1522.65 574.41 L1525.86 575.58 L1528.74 576.75 L1531.30 577.93 L1533.53 579.10 L1535.42 580.25 L1536.97 581.39 L1538.19 582.51 L1539.05 583.59 L1539.58 584.62Z" fill="none" stroke="#000" stroke-width="4.5" stroke-linejoin="round"/></svg>
</body></html>
